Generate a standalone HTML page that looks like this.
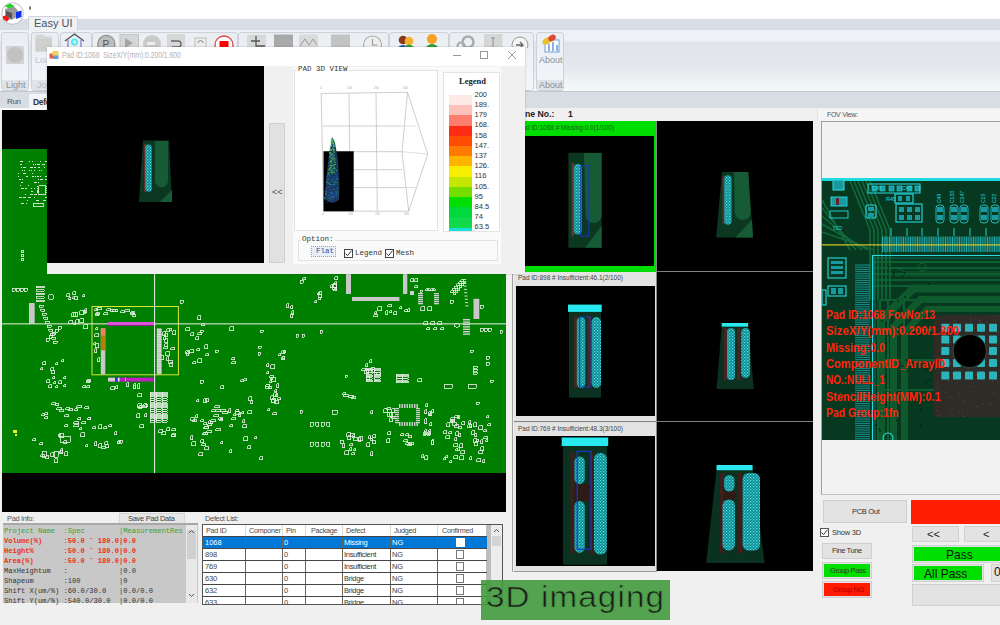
<!DOCTYPE html>
<html><head><meta charset="utf-8">
<style>
*{margin:0;padding:0;box-sizing:border-box}
html,body{width:1000px;height:625px;overflow:hidden;background:#f0f0f0;font-family:"Liberation Sans",sans-serif;color:#222}
.a{position:absolute}
.t{position:absolute;white-space:nowrap;line-height:1}
.sx{transform-origin:0 0}
</style></head><body>
<!-- top white bar -->
<div class="a" style="left:0;top:0;width:1000px;height:19px;background:#fff"></div>
<!-- tab strip -->
<div class="a" style="left:0;top:19px;width:1000px;height:11px;background:#d9dde5"></div>
<!-- ribbon -->
<div class="a" style="left:0;top:30px;width:1000px;height:62px;background:linear-gradient(#eef2f7 0,#eef2f7 10px,#dfe3ea 13px,#e6eaee 40px,#f3f8f9 58px);border-bottom:1px solid #c3c7cc"></div>

<!-- logo -->
<svg class="a" style="left:0;top:0" width="34" height="28" viewBox="0 0 34 28">
<circle cx="12.5" cy="13.5" r="10.8" fill="#fff" stroke="#aaa" stroke-width="0.8"/>
<polygon points="5,6 10,3.5 14.5,6 9.5,9" fill="#18d818"/>
<polygon points="5,9 14,6.5 17.5,10 17.5,17 11,20 5,16" fill="#9a9a9a"/>
<polygon points="6,11 12,13 12,19 6,16" fill="#555"/>
<polygon points="16,12 21.5,10.5 21.5,17 16,19" fill="#1030f0"/>
<polygon points="3,16 7,15.5 9.5,19 7,21.5 3,19" fill="#f01818"/>
<rect x="29" y="6.5" width="2" height="3" fill="#777"/>
</svg>
<!-- Easy UI tab -->
<div class="a" style="left:28px;top:16px;width:50px;height:15px;background:#eef1f5;border:1px solid #cfd4db;border-bottom:none;border-radius:2px 2px 0 0"></div>
<div class="t" style="left:34px;top:18px;font-size:11px;color:#4a5360">Easy UI</div>
<!-- ribbon groups -->
<div class="a" style="left:1px;top:32px;width:28px;height:59px;border:1px solid #cdd2d9;border-radius:3px;background:linear-gradient(#eaeef3,#f3f6f9)"></div>
<div class="a" style="left:2px;top:80px;width:26px;height:10px;background:#dfe3e9"></div>
<div class="t" style="left:6px;top:81px;font-size:9px;color:#8a9097">Light</div>
<div class="a" style="left:6px;top:46px;width:18px;height:18px;background:#d3d3d3"></div>
<div class="a" style="left:7px;top:47px;width:16px;height:16px;border-radius:50%;background:#c2c2c2"></div>
<div class="a" style="left:31px;top:32px;width:28px;height:59px;border:1px solid #cdd2d9;border-radius:3px;background:linear-gradient(#eaeef3,#f3f6f9)"></div>
<div class="a" style="left:32px;top:80px;width:26px;height:10px;background:#dfe3e9"></div>
<div class="t" style="left:37px;top:81px;font-size:9px;color:#b5b9bf">Jo</div>
<div class="t" style="left:35px;top:56px;font-size:9px;color:#c0c3c7">Loa</div>
<svg class="a" style="left:34px;top:33px" width="20" height="20"><path d="M1.5 1.5h8l2 2h6.5v15h-16.5z" fill="#d6d6d6"/><path d="M1.5 6h16.5v12.5h-16.5z" fill="#cfcfcf"/></svg>
<div class="a" style="left:60px;top:32px;width:32px;height:59px;border:1px solid #cdd2d9;border-radius:3px;background:linear-gradient(#eaeef3,#f3f6f9)"></div>
<svg class="a" style="left:63px;top:32px" width="24" height="16"><path d="M2 9 L11.5 2 L21 9" fill="none" stroke="#4a4f57" stroke-width="1.3"/><path d="M5 8v8M18 8v8" stroke="#8a8ad0" stroke-width="1.4"/><circle cx="11.5" cy="10" r="3.6" fill="#50e8f0"/><circle cx="11.5" cy="10" r="1.8" fill="#c8ffff"/></svg>
<div class="a" style="left:92px;top:32px;width:146px;height:59px;border:1px solid #cdd2d9;border-radius:3px;background:linear-gradient(#eaeef3,#f3f6f9)"></div>
<svg class="a" style="left:92px;top:32px" width="146" height="16">
<circle cx="14.3" cy="12" r="8.6" fill="#bdbdbd" stroke="#8d8d8d" stroke-width="1.2"/>
<text x="10.5" y="16" font-family="Liberation Sans" font-size="10" fill="#555">P</text>
<rect x="28" y="2.5" width="18.5" height="14" fill="#d6d6d6" stroke="#c3c3c3"/>
<path d="M33 6 L41 11 L33 16z" fill="#a5a5a5"/>
<circle cx="60" cy="12" r="9" fill="#c9c9c9"/>
<rect x="55" y="10" width="8" height="3" fill="#eee"/>
<rect x="75" y="2" width="18" height="14" fill="#d7d7d7"/>
<path d="M79 9 h7 a3 3 0 0 1 0 6 h-6" fill="none" stroke="#666" stroke-width="1.3"/>
<rect x="103" y="6" width="11" height="10" fill="#ececec" stroke="#bbb"/>
<path d="M106 11 a2.5 2.5 0 0 1 5 0" fill="none" stroke="#888"/>
<circle cx="132" cy="13" r="9" fill="#fff" stroke="#e04040" stroke-width="1.3"/>
<rect x="127.5" y="9" width="9" height="8" fill="#f00"/>
</svg>
<div class="a" style="left:238px;top:32px;width:151px;height:59px;border:1px solid #cdd2d9;border-radius:3px;background:linear-gradient(#eaeef3,#f3f6f9)"></div>
<svg class="a" style="left:238px;top:32px" width="151" height="16">
<rect x="9" y="2.5" width="19" height="13.5" fill="#d8d8d8"/>
<path d="M18 4v10h9M13 9h9" fill="none" stroke="#555" stroke-width="1.3"/>
<rect x="36" y="2.5" width="19" height="13.5" fill="#a9a9a9"/>
<rect x="61" y="2.5" width="19" height="13.5" fill="#dadada"/>
<path d="M62 14 l5-7 l4 6 l4-6 l4 6" fill="none" stroke="#999" stroke-width="1"/>
<rect x="93" y="2.5" width="19" height="13.5" fill="#c3c3c3"/>
<circle cx="134.5" cy="13" r="9" fill="#eee" stroke="#aaa" stroke-width="1.1"/>
<path d="M134.5 7v6h5" fill="none" stroke="#999" stroke-width="1.1"/>
</svg>
<div class="a" style="left:389px;top:32px;width:60px;height:59px;border:1px solid #cdd2d9;border-radius:3px;background:linear-gradient(#eaeef3,#f3f6f9)"></div>
<svg class="a" style="left:389px;top:32px" width="60" height="16">
<circle cx="14" cy="8" r="4.3" fill="#8a3a1a"/><path d="M8 16 q6-6 12 0z" fill="#2050b0"/>
<circle cx="20" cy="9" r="4.3" fill="#f5b030"/><path d="M14 16 q6-7 12 0z" fill="#30a030"/>
<circle cx="43" cy="7" r="5" fill="#f5a020"/><path d="M36 16 q7-8 14 0z" fill="#30a030"/>
</svg>
<div class="a" style="left:449px;top:32px;width:85px;height:59px;border:1px solid #cdd2d9;border-radius:3px;background:linear-gradient(#eaeef3,#f3f6f9)"></div>
<svg class="a" style="left:449px;top:32px" width="85" height="16">
<circle cx="19" cy="10" r="5.5" fill="none" stroke="#aaa" stroke-width="2.5"/><circle cx="12" cy="14" r="3.5" fill="none" stroke="#aaa" stroke-width="2"/>
<rect x="35" y="2" width="18.5" height="14" fill="#d6d6d6"/><path d="M44 5v11M42 6h4" stroke="#999" stroke-width="1.2"/>
<circle cx="71" cy="13" r="8" fill="#f4f4f4" stroke="#999" stroke-width="1"/><path d="M67 13h7M71 10l3 3l-3 3" fill="none" stroke="#666" stroke-width="1.3"/>
</svg>
<div class="t" style="left:520px;top:56px;font-size:9px;color:#aaa">t</div>
<div class="a" style="left:536px;top:32px;width:28px;height:59px;border:1px solid #cdd2d9;border-radius:3px;background:linear-gradient(#eaeef3,#f3f6f9)"></div>
<div class="a" style="left:537px;top:80px;width:26px;height:10px;background:#dfe3e9"></div>
<div class="t" style="left:539px;top:81px;font-size:9px;color:#8a9097">About</div>
<div class="t" style="left:539px;top:56px;font-size:9px;color:#8a9097">About</div>
<svg class="a" style="left:540px;top:33px" width="22" height="20">
<rect x="5" y="7" width="14" height="12" fill="#fff" stroke="#6fa0d8"/><path d="M9 11v7M13 9v9M17 12v6" stroke="#6fa0d8" stroke-width="1.6"/>
<ellipse cx="7" cy="8" rx="5" ry="3.2" fill="#e8c030" transform="rotate(-30 7 8)"/>
<ellipse cx="12" cy="5" rx="4" ry="3" fill="#e04830" transform="rotate(-30 12 5)"/>
</svg>

<!-- gray band under ribbon -->
<div class="a" style="left:0;top:92px;width:1000px;height:16px;background:#d8dce3"></div>
<div class="a" style="left:0;top:108px;width:1000px;height:517px;background:#f0f0f0"></div>

<!-- left view area -->
<div class="a" style="left:2px;top:110px;width:504px;height:402px;background:#000"></div>
<!-- PCB -->
<svg class="a" style="left:2px;top:149px" width="504" height="324" viewBox="2 149 504 324">
<rect x="2" y="149" width="504" height="324" fill="#008000"/>
<path d="M38.5 185.5h7.0v9.0h-7.0zM33.0 203.0h10.0v3.5h-10.0zM21.0 250.0h2.5v2.5h-2.5zM21.0 254.0h2.5v2.5h-2.5zM21.0 258.0h2.5v2.5h-2.5zM12.0 288.0h3.0v3.0h-3.0zM16.0 288.0h3.0v3.0h-3.0zM20.0 288.0h3.0v3.0h-3.0zM24.0 288.0h3.0v3.0h-3.0zM36.0 286.0h8.0v1.5h-8.0zM36.0 289.5h8.0v1.5h-8.0zM36.0 293.0h8.0v1.5h-8.0zM36.0 296.5h8.0v1.5h-8.0zM36.0 300.0h8.0v1.5h-8.0zM48 297a3 2.5 0 1 0 6 0a3 2.5 0 1 0 -6 0zM72.5 296.5h2.0v2.0h-2.0zM82.5 294.5h2.0v2.0h-2.0zM66.5 293.5h3.0v3.0h-3.0zM68.5 297.5h2.0v2.0h-2.0zM72.5 291.5h3.0v3.0h-3.0zM74.5 296.5h3.0v3.0h-3.0zM39.0 305.0h4.0v2.0h-4.0zM40.6 309.0h4.0v2.0h-4.0zM42.2 313.0h4.0v2.0h-4.0zM43.8 317.0h4.0v2.0h-4.0zM45.4 321.0h4.0v2.0h-4.0zM47.0 325.0h4.0v2.0h-4.0zM48.6 329.0h4.0v2.0h-4.0zM50.2 333.0h4.0v2.0h-4.0zM51.8 337.0h4.0v2.0h-4.0zM53.4 341.0h4.0v2.0h-4.0zM46.0 338.0h3.0v3.0h-3.0zM49.0 335.0h3.0v3.0h-3.0zM52.0 332.0h3.0v3.0h-3.0zM55.0 329.0h3.0v3.0h-3.0zM58.0 326.0h3.0v3.0h-3.0zM84.5 308.5h2.0v4.0h-2.0zM73.5 322.5h2.0v2.0h-2.0zM75.5 319.5h3.0v4.0h-3.0zM83.5 310.5h2.0v3.0h-2.0zM73.5 312.5h4.0v4.0h-4.0zM68.5 320.5h4.0v3.0h-4.0zM71.5 312.5h4.0v4.0h-4.0zM79.5 318.5h4.0v4.0h-4.0zM79.5 310.5h4.0v4.0h-4.0zM83.5 324.5h4.0v4.0h-4.0zM106.5 308.5h4.0v2.0h-4.0zM94.5 308.5h3.0v2.0h-3.0zM96.5 307.5h5.0v2.0h-5.0zM95.5 312.5h4.0v2.0h-4.0zM95.5 313.5h3.0v2.0h-3.0zM103.5 312.5h4.0v2.0h-4.0zM130.5 311.5h4.0v2.0h-4.0zM130.5 312.5h3.0v2.0h-3.0zM112.5 309.5h5.0v2.0h-5.0zM132.5 314.5h3.0v2.0h-3.0zM124.5 309.5h5.0v2.0h-5.0zM110.5 309.5h5.0v2.0h-5.0zM120.5 310.5h4.0v2.0h-4.0zM94.5 348.5h2.0v4.0h-2.0zM93.5 342.5h2.0v2.0h-2.0zM94.5 333.5h4.0v3.0h-4.0zM95.5 327.5h2.0v2.0h-2.0zM97.5 357.5h2.0v4.0h-2.0zM95.5 343.5h3.0v4.0h-3.0zM164.5 333.5h3.0v3.0h-3.0zM170.5 347.5h4.0v2.0h-4.0zM169.5 362.5h3.0v4.0h-3.0zM163.5 336.5h2.0v3.0h-2.0zM166.5 328.5h3.0v3.0h-3.0zM172.5 330.5h3.0v4.0h-3.0zM164.5 338.5h3.0v4.0h-3.0zM162.5 331.5h3.0v4.0h-3.0zM168.5 360.5h4.0v3.0h-4.0zM160.5 355.5h3.0v4.0h-3.0zM163.5 346.5h4.0v2.0h-4.0zM169.5 328.5h2.0v2.0h-2.0zM164.5 343.5h3.0v3.0h-3.0zM165.5 351.5h4.0v4.0h-4.0zM166.5 356.5h2.0v4.0h-2.0zM197.5 358.5h4.0v4.0h-4.0zM192.5 361.5h3.0v2.0h-3.0zM197.5 315.5h3.0v4.0h-3.0zM190.5 332.5h3.0v3.0h-3.0zM195.5 336.5h3.0v3.0h-3.0zM204.5 344.5h3.0v4.0h-3.0zM185.5 350.5h4.0v3.0h-4.0zM197.5 332.5h4.0v2.0h-4.0zM185.5 327.5h4.0v3.0h-4.0zM196.5 348.5h3.0v2.0h-3.0zM201.5 323.5h3.0v2.0h-3.0zM189.5 349.5h4.0v3.0h-4.0zM186.5 351.5h2.0v4.0h-2.0zM205.5 353.5h3.0v2.0h-3.0zM229.5 326.5h4.0v4.0h-4.0zM231.5 357.5h3.0v2.0h-3.0zM231.5 361.5h4.0v2.0h-4.0zM50.5 367.5h3.0v3.0h-3.0zM48.5 384.5h3.0v3.0h-3.0zM63.5 384.5h2.0v2.0h-2.0zM52.5 376.5h2.0v2.0h-2.0zM58.5 380.5h3.0v3.0h-3.0zM46.5 379.5h3.0v3.0h-3.0zM55.5 385.5h2.0v2.0h-2.0zM63.5 376.5h2.0v2.0h-2.0zM61.5 359.5h2.0v2.0h-2.0zM40.5 367.5h2.0v2.0h-2.0zM55.5 362.5h2.0v2.0h-2.0zM42.5 361.5h3.0v3.0h-3.0zM53.5 381.5h2.0v2.0h-2.0zM51.5 370.5h3.0v3.0h-3.0zM86.5 379.5h4.0v2.0h-4.0zM86.5 385.5h3.0v2.0h-3.0zM86.5 380.5h3.0v2.0h-3.0zM82.5 385.5h3.0v2.0h-3.0zM110.5 386.5h4.0v3.0h-4.0zM115.5 385.5h2.0v3.0h-2.0zM126.5 382.5h2.0v4.0h-2.0zM137.5 383.5h2.0v5.0h-2.0zM133.5 385.5h2.0v3.0h-2.0zM133.5 383.5h2.0v5.0h-2.0zM137.5 393.5h4.0v3.0h-4.0zM143.5 403.5h3.0v4.0h-3.0zM144.5 413.5h2.0v3.0h-2.0zM139.5 424.5h4.0v3.0h-4.0zM138.5 405.5h3.0v3.0h-3.0zM137.5 403.5h4.0v4.0h-4.0zM139.5 405.5h3.0v2.0h-3.0zM144.5 404.5h3.0v2.0h-3.0zM136.5 413.5h3.0v4.0h-3.0zM150.0 392.0h5.0v1.6h-5.0zM150.0 394.2h5.0v1.6h-5.0zM150.0 396.4h5.0v1.6h-5.0zM150.0 398.6h5.0v1.6h-5.0zM150.0 400.8h5.0v1.6h-5.0zM150.0 403.0h5.0v1.6h-5.0zM150.0 405.2h5.0v1.6h-5.0zM150.0 407.4h5.0v1.6h-5.0zM150.0 409.6h5.0v1.6h-5.0zM150.0 411.8h5.0v1.6h-5.0zM150.0 414.0h5.0v1.6h-5.0zM150.0 416.2h5.0v1.6h-5.0zM150.0 418.4h5.0v1.6h-5.0zM150.0 420.6h5.0v1.6h-5.0zM156.0 392.0h5.0v1.6h-5.0zM156.0 394.2h5.0v1.6h-5.0zM156.0 396.4h5.0v1.6h-5.0zM156.0 398.6h5.0v1.6h-5.0zM156.0 400.8h5.0v1.6h-5.0zM156.0 403.0h5.0v1.6h-5.0zM156.0 405.2h5.0v1.6h-5.0zM156.0 407.4h5.0v1.6h-5.0zM156.0 409.6h5.0v1.6h-5.0zM156.0 411.8h5.0v1.6h-5.0zM156.0 414.0h5.0v1.6h-5.0zM156.0 416.2h5.0v1.6h-5.0zM156.0 418.4h5.0v1.6h-5.0zM156.0 420.6h5.0v1.6h-5.0zM162.0 392.0h5.0v1.6h-5.0zM162.0 394.2h5.0v1.6h-5.0zM162.0 396.4h5.0v1.6h-5.0zM162.0 398.6h5.0v1.6h-5.0zM162.0 400.8h5.0v1.6h-5.0zM162.0 403.0h5.0v1.6h-5.0zM162.0 405.2h5.0v1.6h-5.0zM162.0 407.4h5.0v1.6h-5.0zM162.0 409.6h5.0v1.6h-5.0zM162.0 411.8h5.0v1.6h-5.0zM162.0 414.0h5.0v1.6h-5.0zM162.0 416.2h5.0v1.6h-5.0zM162.0 418.4h5.0v1.6h-5.0zM162.0 420.6h5.0v1.6h-5.0zM44.5 412.5h3.0v2.0h-3.0zM51.5 402.5h4.0v2.0h-4.0zM87.5 417.5h3.0v2.0h-3.0zM68.5 408.5h4.0v2.0h-4.0zM56.5 407.5h5.0v2.0h-5.0zM44.5 416.5h3.0v2.0h-3.0zM77.5 417.5h3.0v2.0h-3.0zM64.5 424.5h3.0v2.0h-3.0zM59.5 409.5h4.0v2.0h-4.0zM64.5 414.5h4.0v2.0h-4.0zM73.5 424.5h5.0v2.0h-5.0zM81.5 421.5h4.0v2.0h-4.0zM87.5 417.5h3.0v2.0h-3.0zM73.5 421.5h5.0v2.0h-5.0zM84.5 406.5h4.0v2.0h-4.0zM74.5 408.5h3.0v2.0h-3.0zM65.5 407.5h4.0v2.0h-4.0zM55.5 403.5h3.0v2.0h-3.0zM76.5 405.5h5.0v2.0h-5.0zM41.5 413.5h3.0v2.0h-3.0zM58.5 433.5h2.0v3.0h-2.0zM60.5 448.5h2.0v4.0h-2.0zM59.5 433.5h4.0v4.0h-4.0zM59.5 450.5h3.0v3.0h-3.0zM64.5 451.5h3.0v4.0h-3.0zM63.5 440.5h3.0v3.0h-3.0zM60.0 436.0h10.0v6.0h-10.0zM98.5 443.5h3.0v4.0h-3.0zM92.5 426.5h3.0v2.0h-3.0zM117.5 440.5h2.0v3.0h-2.0zM103.5 426.5h3.0v2.0h-3.0zM114.5 431.5h2.0v3.0h-2.0zM94.5 441.5h2.0v4.0h-2.0zM108.5 424.5h3.0v2.0h-3.0zM101.5 446.5h4.0v2.0h-4.0zM98.5 424.5h3.0v4.0h-3.0zM85.5 444.5h2.0v2.0h-2.0zM79.5 427.5h2.0v2.0h-2.0zM80.5 432.5h4.0v4.0h-4.0zM105.5 444.5h3.0v3.0h-3.0zM104.5 441.5h3.0v3.0h-3.0zM117.5 441.5h2.0v2.0h-2.0zM32.5 438.5h3.0v2.0h-3.0zM39.5 442.5h3.0v2.0h-3.0zM42.0 451.0h4.0v6.0h-4.0zM54.0 451.0h4.0v6.0h-4.0zM45.5 455.5h3.0v3.0h-3.0zM50.5 452.5h3.0v4.0h-3.0zM40.5 454.5h4.0v2.0h-4.0zM54.5 458.5h3.0v4.0h-3.0zM158.5 429.5h4.0v3.0h-4.0zM161.5 431.5h4.0v3.0h-4.0zM171.5 434.5h3.0v2.0h-3.0zM171.5 428.5h4.0v2.0h-4.0zM171.5 433.5h4.0v3.0h-4.0zM166.5 427.5h3.0v3.0h-3.0zM196.5 399.5h2.0v2.0h-2.0zM200.5 439.5h3.0v3.0h-3.0zM205.5 398.5h3.0v3.0h-3.0zM190.5 435.5h2.0v4.0h-2.0zM192.5 419.5h4.0v2.0h-4.0zM203.5 398.5h3.0v4.0h-3.0zM210.5 421.5h2.0v2.0h-2.0zM208.5 420.5h2.0v3.0h-2.0zM201.5 443.5h4.0v2.0h-4.0zM198.5 452.5h4.0v3.0h-4.0zM203.5 432.5h4.0v2.0h-4.0zM202.5 432.5h3.0v2.0h-3.0zM195.5 414.5h2.0v3.0h-2.0zM190.5 417.5h4.0v3.0h-4.0zM204.5 446.5h4.0v3.0h-4.0zM191.5 441.5h4.0v4.0h-4.0zM207.5 423.5h4.0v2.0h-4.0zM229.5 424.5h3.0v2.0h-3.0zM214.5 405.5h5.0v2.0h-5.0zM220.5 409.5h5.0v2.0h-5.0zM218.5 417.5h4.0v2.0h-4.0zM211.5 409.5h4.0v2.0h-4.0zM203.5 426.5h5.0v2.0h-5.0zM213.5 414.5h5.0v2.0h-5.0zM215.5 409.5h5.0v2.0h-5.0zM219.5 418.5h3.0v2.0h-3.0zM222.5 411.5h5.0v2.0h-5.0zM210.5 419.5h5.0v2.0h-5.0zM206.5 430.5h5.0v2.0h-5.0zM215.5 428.5h5.0v2.0h-5.0zM203.5 422.5h3.0v2.0h-3.0zM200.5 419.5h3.0v2.0h-3.0zM204.5 426.5h4.0v2.0h-4.0zM240.5 379.5h3.0v2.0h-3.0zM231.5 417.5h4.0v2.0h-4.0zM229.5 449.5h2.0v3.0h-2.0zM243.5 436.5h4.0v4.0h-4.0zM247.5 445.5h3.0v3.0h-3.0zM220.5 385.5h3.0v3.0h-3.0zM235.5 411.5h4.0v3.0h-4.0zM250.5 400.5h2.0v3.0h-2.0zM242.5 424.5h4.0v3.0h-4.0zM248.5 396.5h3.0v4.0h-3.0zM235.5 409.5h3.0v2.0h-3.0zM242.5 419.5h2.0v3.0h-2.0zM228.5 408.5h2.0v4.0h-2.0zM254.5 436.5h2.0v2.0h-2.0zM247.5 410.5h4.0v3.0h-4.0zM241.5 411.5h2.0v2.0h-2.0zM220.5 441.5h2.0v2.0h-2.0zM238.5 412.5h2.0v4.0h-2.0zM243.5 378.5h3.0v2.0h-3.0zM233.5 413.5h2.0v2.0h-2.0zM332.5 284.5h4.0v3.0h-4.0zM334.5 281.5h2.0v2.0h-2.0zM334.5 276.5h3.0v3.0h-3.0zM333.5 288.5h3.0v2.0h-3.0zM332.5 287.5h4.0v2.0h-4.0zM330.5 284.5h3.0v3.0h-3.0zM332.5 283.5h4.0v4.0h-4.0zM410.5 278.5h3.0v3.0h-3.0zM414.5 278.5h3.0v3.0h-3.0zM414.5 285.5h3.0v2.0h-3.0zM425.5 288.5h2.0v2.0h-2.0zM428.0 288.5h2.0v2.0h-2.0zM430.5 288.5h2.0v2.0h-2.0zM433.0 288.5h2.0v2.0h-2.0zM420.5 306.5h4.0v4.0h-4.0zM427.5 306.5h4.0v4.0h-4.0zM450.5 290.5h3.0v2.0h-3.0zM453.5 292.5h2.0v2.0h-2.0zM452.5 288.3h3.0v2.0h-3.0zM455.5 290.3h2.0v2.0h-2.0zM454.5 286.1h3.0v2.0h-3.0zM457.5 288.1h2.0v2.0h-2.0zM456.5 283.9h3.0v2.0h-3.0zM459.5 285.9h2.0v2.0h-2.0zM458.5 281.7h3.0v2.0h-3.0zM461.5 283.7h2.0v2.0h-2.0zM460.5 279.5h3.0v2.0h-3.0zM463.5 281.5h2.0v2.0h-2.0zM423.5 321.5h4.0v3.0h-4.0zM430.5 321.5h4.0v3.0h-4.0zM437.5 321.5h4.0v3.0h-4.0zM426.5 327.5h3.0v2.0h-3.0zM433.5 327.5h3.0v2.0h-3.0zM440.5 327.5h3.0v2.0h-3.0zM290.5 305.5h2.0v3.0h-2.0zM291.5 310.5h2.0v4.0h-2.0zM290.5 313.5h2.0v4.0h-2.0zM286.5 303.5h2.0v4.0h-2.0zM302.5 277.5h3.0v2.0h-3.0zM318.5 297.5h2.0v2.0h-2.0zM318.5 294.5h3.0v3.0h-3.0zM317.5 292.5h2.0v2.0h-2.0zM318.5 291.5h3.0v3.0h-3.0zM314.5 300.5h2.0v2.0h-2.0zM407.5 308.5h2.0v3.0h-2.0zM387.5 304.5h4.0v2.0h-4.0zM377.5 306.5h4.0v4.0h-4.0zM373.5 314.5h4.0v2.0h-4.0zM374.5 311.5h2.0v2.0h-2.0zM399.5 306.5h2.0v2.0h-2.0zM385.5 310.5h2.0v4.0h-2.0zM404.5 309.5h3.0v2.0h-3.0zM389.5 310.5h2.0v2.0h-2.0zM393.5 311.5h3.0v3.0h-3.0zM454.5 325.4a2.5 2 0 1 0 5 0a2.5 2 0 1 0 -5 0zM480.0 328.0h3.0v3.0h-3.0zM484.0 328.0h3.0v3.0h-3.0zM488.0 328.0h3.0v3.0h-3.0zM296.0 334.0h2.0v3.0h-2.0zM302.0 334.0h2.0v3.0h-2.0zM258.0 346.0h3.0v2.0h-3.0zM281.5 356.5h3.0v3.0h-3.0zM282.5 356.5h2.0v2.0h-2.0zM283.5 350.5h2.0v2.0h-2.0zM281.5 350.5h3.0v3.0h-3.0zM278.5 353.5h2.0v2.0h-2.0zM270.5 364.5h4.0v4.0h-4.0zM265.5 384.5h4.0v4.0h-4.0zM266.5 363.5h2.0v3.0h-2.0zM271.5 399.5h3.0v3.0h-3.0zM266.5 371.5h2.0v2.0h-2.0zM271.5 398.5h4.0v4.0h-4.0zM265.5 384.5h4.0v2.0h-4.0zM274.5 400.5h4.0v3.0h-4.0zM270.5 395.5h3.0v4.0h-3.0zM269.5 375.5h4.0v2.0h-4.0zM273.5 392.5h3.0v4.0h-3.0zM268.5 386.5h3.0v2.0h-3.0zM272.5 412.5h4.0v2.0h-4.0zM275.5 393.5h2.0v3.0h-2.0zM274.5 389.5h2.0v2.0h-2.0zM267.5 408.5h2.0v2.0h-2.0zM270.5 377.5h2.0v2.0h-2.0zM277.5 397.5h3.0v2.0h-3.0zM271.5 377.5h4.0v4.0h-4.0zM276.5 383.5h2.0v4.0h-2.0zM269.5 380.5h2.0v2.0h-2.0zM473.0 366.0h4.0v2.0h-4.0zM473.0 369.0h4.0v2.0h-4.0zM473.0 372.0h4.0v2.0h-4.0zM486.0 356.0h3.0v3.0h-3.0zM486.0 362.0h3.0v3.0h-3.0zM361.5 368.5h4.0v2.0h-4.0zM376.5 372.5h4.0v2.0h-4.0zM370.5 367.5h4.0v2.0h-4.0zM369.5 359.5h2.0v3.0h-2.0zM366.5 376.5h3.0v3.0h-3.0zM365.5 363.5h2.0v3.0h-2.0zM371.5 369.5h3.0v3.0h-3.0zM364.5 369.5h4.0v4.0h-4.0zM366.0 368.0h6.0v1.6h-6.0zM366.0 370.4h6.0v1.6h-6.0zM366.0 372.8h6.0v1.6h-6.0zM366.0 375.2h6.0v1.6h-6.0zM366.0 377.6h6.0v1.6h-6.0zM366.0 380.0h6.0v1.6h-6.0zM374.0 368.0h6.0v1.6h-6.0zM374.0 370.4h6.0v1.6h-6.0zM374.0 372.8h6.0v1.6h-6.0zM374.0 375.2h6.0v1.6h-6.0zM374.0 377.6h6.0v1.6h-6.0zM374.0 380.0h6.0v1.6h-6.0zM396.0 374.0h6.0v1.6h-6.0zM396.0 376.4h6.0v1.6h-6.0zM396.0 378.8h6.0v1.6h-6.0zM396.0 381.2h6.0v1.6h-6.0zM402.0 374.0h6.0v1.6h-6.0zM402.0 376.4h6.0v1.6h-6.0zM402.0 378.8h6.0v1.6h-6.0zM402.0 381.2h6.0v1.6h-6.0zM417.5 378.5h4.0v3.0h-4.0zM351.5 396.5h4.0v2.0h-4.0zM348.5 395.5h5.0v2.0h-5.0zM343.5 394.5h5.0v2.0h-5.0zM342.5 392.5h3.0v2.0h-3.0zM332.0 410.0h5.0v4.0h-5.0zM370.5 410.5h2.0v3.0h-2.0zM391.5 416.5h3.0v2.0h-3.0zM389.5 412.5h3.0v4.0h-3.0zM386.5 407.5h4.0v2.0h-4.0zM383.5 408.5h4.0v4.0h-4.0zM387.5 431.5h3.0v3.0h-3.0zM387.5 412.5h4.0v4.0h-4.0zM386.5 438.5h3.0v4.0h-3.0zM389.5 417.5h3.0v4.0h-3.0zM391.5 408.5h3.0v4.0h-3.0zM424.5 409.5h2.0v4.0h-2.0zM429.5 422.5h2.0v3.0h-2.0zM424.5 429.5h2.0v5.0h-2.0zM428.5 429.5h2.0v5.0h-2.0zM429.5 412.5h2.0v3.0h-2.0zM425.5 403.5h2.0v3.0h-2.0zM423.5 431.5h2.0v4.0h-2.0zM431.5 409.5h2.0v3.0h-2.0zM428.5 411.5h2.0v4.0h-2.0zM424.5 418.5h2.0v5.0h-2.0zM427.5 431.5h2.0v4.0h-2.0zM431.5 439.5h2.0v5.0h-2.0zM431.5 440.5h2.0v4.0h-2.0zM405.5 442.5h4.0v2.0h-4.0zM409.5 442.5h4.0v2.0h-4.0zM400.5 433.5h3.0v2.0h-3.0zM403.5 439.5h4.0v2.0h-4.0zM405.5 433.5h3.0v2.0h-3.0zM407.5 443.5h4.0v2.0h-4.0zM408.5 435.5h3.0v2.0h-3.0zM310.0 422.0h3.0v4.0h-3.0zM315.5 422.0h3.0v4.0h-3.0zM321.0 422.0h3.0v4.0h-3.0zM326.5 422.0h3.0v4.0h-3.0zM310.0 442.0h3.0v4.0h-3.0zM315.5 442.0h3.0v4.0h-3.0zM321.0 442.0h3.0v4.0h-3.0zM326.5 442.0h3.0v4.0h-3.0zM351.5 452.5h3.0v2.0h-3.0zM372.5 440.5h3.0v3.0h-3.0zM358.5 437.5h2.0v4.0h-2.0zM372.5 434.5h3.0v3.0h-3.0zM349.5 447.5h2.0v3.0h-2.0zM342.5 443.5h2.0v4.0h-2.0zM349.5 443.5h3.0v2.0h-3.0zM344.5 450.5h4.0v4.0h-4.0zM350.5 433.5h4.0v3.0h-4.0zM368.5 435.5h2.0v3.0h-2.0zM347.5 435.5h3.0v4.0h-3.0zM353.5 448.5h2.0v2.0h-2.0zM353.5 437.5h4.0v3.0h-4.0zM358.5 436.5h4.0v4.0h-4.0zM352.5 434.5h2.0v3.0h-2.0zM346.5 432.5h4.0v4.0h-4.0zM370.5 438.5h2.0v2.0h-2.0zM366.5 442.5h3.0v4.0h-3.0zM370.5 451.5h2.0v4.0h-2.0zM454.5 437.5h2.0v3.0h-2.0zM453.5 443.5h4.0v3.0h-4.0zM473.5 422.5h3.0v4.0h-3.0zM480.5 439.5h2.0v4.0h-2.0zM474.5 441.5h3.0v4.0h-3.0zM448.5 431.5h3.0v2.0h-3.0zM452.5 422.5h4.0v3.0h-4.0zM469.5 456.5h2.0v3.0h-2.0zM474.5 433.5h2.0v3.0h-2.0zM459.5 455.5h4.0v4.0h-4.0zM449.5 460.5h2.0v2.0h-2.0zM455.5 448.5h2.0v2.0h-2.0zM457.5 415.5h2.0v3.0h-2.0zM450.5 417.5h4.0v3.0h-4.0zM455.5 431.5h3.0v4.0h-3.0zM476.5 458.5h4.0v3.0h-4.0zM473.5 438.5h3.0v4.0h-3.0zM450.5 419.5h2.0v3.0h-2.0zM461.5 421.5h3.0v3.0h-3.0zM468.5 420.5h2.0v3.0h-2.0zM454.5 424.5h4.0v3.0h-4.0zM458.5 426.5h3.0v2.0h-3.0zM445.5 455.5h2.0v2.0h-2.0zM446.5 422.5h3.0v4.0h-3.0zM487.5 423.5h3.0v2.0h-3.0zM443.5 430.5h3.0v3.0h-3.0zM467.5 424.5h4.0v3.0h-4.0zM478.5 425.5h4.0v4.0h-4.0zM482.5 459.5h2.0v3.0h-2.0zM480.5 446.5h3.0v4.0h-3.0zM485.5 439.5h2.0v2.0h-2.0zM454.5 415.5h4.0v2.0h-4.0zM445.5 435.5h4.0v3.0h-4.0zM486.5 415.5h2.0v2.0h-2.0zM478.5 450.5h4.0v3.0h-4.0zM460.5 450.5h4.0v3.0h-4.0zM483.5 436.5h4.0v2.0h-4.0zM453.5 455.5h4.0v3.0h-4.0zM469.5 424.5h2.0v2.0h-2.0zM459.5 443.5h3.0v4.0h-3.0zM471.5 430.5h3.0v4.0h-3.0zM483.5 429.5h3.0v2.0h-3.0zM457.5 447.5h2.0v3.0h-2.0zM476.5 439.5h2.0v2.0h-2.0zM450.5 419.5h4.0v2.0h-4.0zM458.5 433.5h2.0v3.0h-2.0zM444.0 384.0h8.0v4.0h-8.0zM468.0 384.0h8.0v4.0h-8.0zM476.0 402.0h3.0v2.0h-3.0zM421.5 454.5h2.0v3.0h-2.0zM424.5 455.5h3.0v4.0h-3.0zM443.5 457.5h2.0v2.0h-2.0zM259 458a2 2 0 1 0 4 0a2 2 0 1 0 -4 0zM258.0 352.0h2.0v3.0h-2.0zM480.0 305.0h3.0v3.0h-3.0zM500.0 330.0h2.0v3.0h-2.0zM470.0 350.0h3.0v2.0h-3.0zM490.0 380.0h3.0v2.0h-3.0zM300.0 280.0h3.0v3.0h-3.0zM320.0 330.0h2.0v3.0h-2.0zM345.0 375.0h2.0v2.0h-2.0zM260.0 330.0h3.0v2.0h-3.0zM300.0 410.0h2.0v3.0h-2.0zM340.0 440.0h3.0v3.0h-3.0zM420.0 290.0h2.0v2.0h-2.0zM450.0 300.0h3.0v3.0h-3.0zM180.0 300.0h3.0v3.0h-3.0zM200.0 330.0h3.0v2.0h-3.0zM215.0 350.0h3.0v2.0h-3.0zM120.0 440.0h2.0v3.0h-2.0zM200.0 380.0h3.0v3.0h-3.0z" fill="none" stroke="#e8f0e8" stroke-width="0.8" shape-rendering="crispEdges"/>
<rect x="20.0" y="161.0" width="3.0" height="1.0" fill="#d8e8d8"/>
<rect x="29.0" y="161.0" width="1.0" height="1.0" fill="#d8e8d8"/>
<rect x="32.0" y="161.0" width="1.0" height="1.0" fill="#d8e8d8"/>
<rect x="40.0" y="161.0" width="1.0" height="1.0" fill="#d8e8d8"/>
<rect x="45.0" y="161.0" width="3.0" height="1.0" fill="#d8e8d8"/>
<rect x="20.0" y="164.0" width="2.0" height="1.0" fill="#d8e8d8"/>
<rect x="33.0" y="164.0" width="1.0" height="1.0" fill="#d8e8d8"/>
<rect x="35.0" y="164.0" width="1.0" height="1.0" fill="#d8e8d8"/>
<rect x="37.0" y="164.0" width="3.0" height="1.0" fill="#d8e8d8"/>
<rect x="42.0" y="164.0" width="3.0" height="1.0" fill="#d8e8d8"/>
<rect x="21.0" y="167.0" width="1.0" height="1.0" fill="#d8e8d8"/>
<rect x="23.0" y="167.0" width="3.0" height="1.0" fill="#d8e8d8"/>
<rect x="30.0" y="167.0" width="3.0" height="1.0" fill="#d8e8d8"/>
<rect x="34.0" y="167.0" width="2.0" height="1.0" fill="#d8e8d8"/>
<rect x="38.0" y="167.0" width="2.0" height="1.0" fill="#d8e8d8"/>
<rect x="44.0" y="167.0" width="1.0" height="1.0" fill="#d8e8d8"/>
<rect x="22.0" y="170.0" width="1.0" height="1.0" fill="#d8e8d8"/>
<rect x="24.0" y="170.0" width="1.0" height="1.0" fill="#d8e8d8"/>
<rect x="29.0" y="170.0" width="1.0" height="1.0" fill="#d8e8d8"/>
<rect x="31.0" y="170.0" width="1.0" height="1.0" fill="#d8e8d8"/>
<rect x="34.0" y="170.0" width="1.0" height="1.0" fill="#d8e8d8"/>
<rect x="39.0" y="170.0" width="1.0" height="1.0" fill="#d8e8d8"/>
<rect x="41.0" y="170.0" width="1.0" height="1.0" fill="#d8e8d8"/>
<rect x="18.0" y="173.0" width="1.0" height="1.0" fill="#d8e8d8"/>
<rect x="23.0" y="173.0" width="3.0" height="1.0" fill="#d8e8d8"/>
<rect x="32.0" y="173.0" width="1.0" height="1.0" fill="#d8e8d8"/>
<rect x="18.0" y="176.0" width="1.0" height="1.0" fill="#d8e8d8"/>
<rect x="26.0" y="176.0" width="2.0" height="1.0" fill="#d8e8d8"/>
<rect x="32.0" y="176.0" width="2.0" height="1.0" fill="#d8e8d8"/>
<rect x="35.0" y="176.0" width="1.0" height="1.0" fill="#d8e8d8"/>
<rect x="37.0" y="176.0" width="2.0" height="1.0" fill="#d8e8d8"/>
<rect x="40.0" y="176.0" width="1.0" height="1.0" fill="#d8e8d8"/>
<rect x="45.0" y="176.0" width="3.0" height="1.0" fill="#d8e8d8"/>
<rect x="19.0" y="179.0" width="2.0" height="1.0" fill="#d8e8d8"/>
<rect x="22.0" y="179.0" width="1.0" height="1.0" fill="#d8e8d8"/>
<rect x="38.0" y="179.0" width="1.0" height="1.0" fill="#d8e8d8"/>
<rect x="40.0" y="179.0" width="3.0" height="1.0" fill="#d8e8d8"/>
<rect x="45.0" y="179.0" width="2.0" height="1.0" fill="#d8e8d8"/>
<rect x="21.0" y="182.0" width="2.0" height="1.0" fill="#d8e8d8"/>
<rect x="34.0" y="182.0" width="3.0" height="1.0" fill="#d8e8d8"/>
<rect x="38.0" y="182.0" width="1.0" height="1.0" fill="#d8e8d8"/>
<rect x="20.0" y="185.0" width="1.0" height="1.0" fill="#d8e8d8"/>
<rect x="28.0" y="185.0" width="1.0" height="1.0" fill="#d8e8d8"/>
<rect x="41.0" y="185.0" width="2.0" height="1.0" fill="#d8e8d8"/>
<rect x="21.0" y="188.0" width="3.0" height="1.0" fill="#d8e8d8"/>
<rect x="25.0" y="188.0" width="2.0" height="1.0" fill="#d8e8d8"/>
<rect x="31.0" y="188.0" width="1.0" height="1.0" fill="#d8e8d8"/>
<rect x="34.0" y="188.0" width="1.0" height="1.0" fill="#d8e8d8"/>
<rect x="45.0" y="188.0" width="1.0" height="1.0" fill="#d8e8d8"/>
<rect x="31.0" y="191.0" width="2.0" height="1.0" fill="#d8e8d8"/>
<rect x="37.0" y="191.0" width="2.0" height="1.0" fill="#d8e8d8"/>
<rect x="25.0" y="194.0" width="1.0" height="1.0" fill="#d8e8d8"/>
<rect x="30.0" y="194.0" width="3.0" height="1.0" fill="#d8e8d8"/>
<rect x="34.0" y="194.0" width="3.0" height="1.0" fill="#d8e8d8"/>
<rect x="38.0" y="194.0" width="1.0" height="1.0" fill="#d8e8d8"/>
<rect x="41.0" y="194.0" width="1.0" height="1.0" fill="#d8e8d8"/>
<rect x="43.0" y="194.0" width="1.0" height="1.0" fill="#d8e8d8"/>
<rect x="19.0" y="197.0" width="3.0" height="1.0" fill="#d8e8d8"/>
<rect x="23.0" y="197.0" width="3.0" height="1.0" fill="#d8e8d8"/>
<rect x="28.0" y="197.0" width="3.0" height="1.0" fill="#d8e8d8"/>
<rect x="34.0" y="197.0" width="1.0" height="1.0" fill="#d8e8d8"/>
<rect x="45.0" y="197.0" width="2.0" height="1.0" fill="#d8e8d8"/>
<rect x="27.0" y="200.0" width="1.0" height="1.0" fill="#d8e8d8"/>
<rect x="36.0" y="200.0" width="3.0" height="1.0" fill="#d8e8d8"/>
<rect x="43.0" y="200.0" width="3.0" height="1.0" fill="#d8e8d8"/>
<rect x="21.0" y="203.0" width="3.0" height="1.0" fill="#d8e8d8"/>
<rect x="26.0" y="203.0" width="1.0" height="1.0" fill="#d8e8d8"/>
<rect x="36.0" y="203.0" width="3.0" height="1.0" fill="#d8e8d8"/>
<rect x="42.0" y="203.0" width="1.0" height="1.0" fill="#d8e8d8"/>
<rect x="37.0" y="186.0" width="1.0" height="1.0" fill="#d8e8d8"/>
<rect x="46.0" y="186.0" width="1.0" height="1.0" fill="#d8e8d8"/>
<rect x="37.0" y="188.0" width="1.0" height="1.0" fill="#d8e8d8"/>
<rect x="46.0" y="188.0" width="1.0" height="1.0" fill="#d8e8d8"/>
<rect x="37.0" y="190.0" width="1.0" height="1.0" fill="#d8e8d8"/>
<rect x="46.0" y="190.0" width="1.0" height="1.0" fill="#d8e8d8"/>
<rect x="37.0" y="192.0" width="1.0" height="1.0" fill="#d8e8d8"/>
<rect x="46.0" y="192.0" width="1.0" height="1.0" fill="#d8e8d8"/>
<rect x="346.0" y="274.0" width="5.0" height="20.0" fill="#c8c8c8"/>
<rect x="403.0" y="274.0" width="4.3" height="20.0" fill="#c8c8c8"/>
<rect x="352.0" y="297.0" width="47.4" height="4.0" fill="#c8c8c8"/>
<rect x="410.0" y="291.0" width="4.0" height="4.0" fill="#d0d0d0"/>
<rect x="418.0" y="293.0" width="5.0" height="1.3" fill="#d0d0d0"/>
<rect x="418.0" y="295.0" width="5.0" height="1.3" fill="#d0d0d0"/>
<rect x="418.0" y="297.0" width="5.0" height="1.3" fill="#d0d0d0"/>
<rect x="418.0" y="299.0" width="5.0" height="1.3" fill="#d0d0d0"/>
<rect x="418.0" y="301.0" width="5.0" height="1.3" fill="#d0d0d0"/>
<rect x="418.0" y="303.0" width="5.0" height="1.3" fill="#d0d0d0"/>
<rect x="434.0" y="293.0" width="5.0" height="1.3" fill="#d0d0d0"/>
<rect x="434.0" y="295.0" width="5.0" height="1.3" fill="#d0d0d0"/>
<rect x="434.0" y="297.0" width="5.0" height="1.3" fill="#d0d0d0"/>
<rect x="434.0" y="299.0" width="5.0" height="1.3" fill="#d0d0d0"/>
<rect x="434.0" y="301.0" width="5.0" height="1.3" fill="#d0d0d0"/>
<rect x="434.0" y="303.0" width="5.0" height="1.3" fill="#d0d0d0"/>
<rect x="463.0" y="279.0" width="3.0" height="1.0" fill="#d8e8d8"/>
<rect x="463.3" y="282.3" width="3.0" height="1.0" fill="#d8e8d8"/>
<rect x="463.6" y="285.6" width="3.0" height="1.0" fill="#d8e8d8"/>
<rect x="463.9" y="288.9" width="3.0" height="1.0" fill="#d8e8d8"/>
<rect x="464.2" y="292.2" width="3.0" height="1.0" fill="#d8e8d8"/>
<rect x="464.5" y="295.5" width="3.0" height="1.0" fill="#d8e8d8"/>
<rect x="464.8" y="298.8" width="3.0" height="1.0" fill="#d8e8d8"/>
<rect x="465.1" y="302.1" width="3.0" height="1.0" fill="#d8e8d8"/>
<rect x="465.4" y="305.4" width="3.0" height="1.0" fill="#d8e8d8"/>
<rect x="473.5" y="298.8" width="5.8" height="20.2" fill="#c8c8c8"/>
<rect x="463.0" y="319.0" width="7.0" height="1.4" fill="#d0d0d0"/>
<rect x="463.0" y="321.4" width="7.0" height="1.4" fill="#d0d0d0"/>
<rect x="463.0" y="323.8" width="7.0" height="1.4" fill="#d0d0d0"/>
<rect x="463.0" y="326.2" width="7.0" height="1.4" fill="#d0d0d0"/>
<rect x="463.0" y="328.6" width="7.0" height="1.4" fill="#d0d0d0"/>
<rect x="463.0" y="331.0" width="7.0" height="1.4" fill="#d0d0d0"/>
<rect x="463.0" y="333.4" width="7.0" height="1.4" fill="#d0d0d0"/>
<rect x="399.0" y="404.0" width="1.4" height="4.0" fill="#d0d0d0"/>
<rect x="399.0" y="422.0" width="1.4" height="4.0" fill="#d0d0d0"/>
<rect x="395.0" y="408.0" width="4.0" height="1.2" fill="#d0d0d0"/>
<rect x="416.0" y="408.0" width="4.0" height="1.2" fill="#d0d0d0"/>
<rect x="401.5" y="404.0" width="1.4" height="4.0" fill="#d0d0d0"/>
<rect x="401.5" y="422.0" width="1.4" height="4.0" fill="#d0d0d0"/>
<rect x="395.0" y="410.0" width="4.0" height="1.2" fill="#d0d0d0"/>
<rect x="416.0" y="410.0" width="4.0" height="1.2" fill="#d0d0d0"/>
<rect x="404.0" y="404.0" width="1.4" height="4.0" fill="#d0d0d0"/>
<rect x="404.0" y="422.0" width="1.4" height="4.0" fill="#d0d0d0"/>
<rect x="395.0" y="412.0" width="4.0" height="1.2" fill="#d0d0d0"/>
<rect x="416.0" y="412.0" width="4.0" height="1.2" fill="#d0d0d0"/>
<rect x="406.5" y="404.0" width="1.4" height="4.0" fill="#d0d0d0"/>
<rect x="406.5" y="422.0" width="1.4" height="4.0" fill="#d0d0d0"/>
<rect x="395.0" y="414.0" width="4.0" height="1.2" fill="#d0d0d0"/>
<rect x="416.0" y="414.0" width="4.0" height="1.2" fill="#d0d0d0"/>
<rect x="409.0" y="404.0" width="1.4" height="4.0" fill="#d0d0d0"/>
<rect x="409.0" y="422.0" width="1.4" height="4.0" fill="#d0d0d0"/>
<rect x="395.0" y="416.0" width="4.0" height="1.2" fill="#d0d0d0"/>
<rect x="416.0" y="416.0" width="4.0" height="1.2" fill="#d0d0d0"/>
<rect x="411.5" y="404.0" width="1.4" height="4.0" fill="#d0d0d0"/>
<rect x="411.5" y="422.0" width="1.4" height="4.0" fill="#d0d0d0"/>
<rect x="395.0" y="418.0" width="4.0" height="1.2" fill="#d0d0d0"/>
<rect x="416.0" y="418.0" width="4.0" height="1.2" fill="#d0d0d0"/>
<rect x="414.0" y="404.0" width="1.4" height="4.0" fill="#d0d0d0"/>
<rect x="414.0" y="422.0" width="1.4" height="4.0" fill="#d0d0d0"/>
<rect x="395.0" y="420.0" width="4.0" height="1.2" fill="#d0d0d0"/>
<rect x="416.0" y="420.0" width="4.0" height="1.2" fill="#d0d0d0"/>
<rect x="416.5" y="404.0" width="1.4" height="4.0" fill="#d0d0d0"/>
<rect x="416.5" y="422.0" width="1.4" height="4.0" fill="#d0d0d0"/>
<rect x="395.0" y="422.0" width="4.0" height="1.2" fill="#d0d0d0"/>
<rect x="416.0" y="422.0" width="4.0" height="1.2" fill="#d0d0d0"/>
<rect x="13" y="430" width="4" height="3" fill="#f0f020"/><rect x="15" y="434" width="2" height="2" fill="#f0f020"/>
<rect x="29" y="303" width="5.7" height="20.7" fill="#c8c8c8"/>
<rect x="92" y="306.5" width="86.4" height="68.3" fill="none" stroke="#d8e830" stroke-width="1"/>
<rect x="2" y="323.3" width="504" height="1.1" fill="#d8e8d8"/>
<rect x="154" y="273" width="1.1" height="200" fill="#d8e8d8"/>
<rect x="108" y="322" width="45.6" height="3.5" fill="#e050e0"/><rect x="108" y="325" width="45.6" height="0.8" fill="#802080"/>
<rect x="100.8" y="328.4" width="4.5" height="46" fill="#c8c8c8"/><rect x="100.8" y="328.4" width="4.5" height="7" fill="#f08060"/><rect x="100.8" y="335.4" width="4.5" height="15" fill="#b08010"/>
<rect x="156.8" y="328.4" width="4.8" height="46" fill="#c8c8c8"/>
<rect x="156.8" y="329.0" width="4.8" height="0.5" fill="#e8e8e8"/>
<rect x="156.8" y="331.5" width="4.8" height="0.5" fill="#e8e8e8"/>
<rect x="156.8" y="334.0" width="4.8" height="0.5" fill="#e8e8e8"/>
<rect x="156.8" y="336.5" width="4.8" height="0.5" fill="#e8e8e8"/>
<rect x="156.8" y="339.0" width="4.8" height="0.5" fill="#e8e8e8"/>
<rect x="156.8" y="341.5" width="4.8" height="0.5" fill="#e8e8e8"/>
<rect x="156.8" y="344.0" width="4.8" height="0.5" fill="#e8e8e8"/>
<rect x="156.8" y="346.5" width="4.8" height="0.5" fill="#e8e8e8"/>
<rect x="156.8" y="349.0" width="4.8" height="0.5" fill="#e8e8e8"/>
<rect x="156.8" y="351.5" width="4.8" height="0.5" fill="#e8e8e8"/>
<rect x="156.8" y="354.0" width="4.8" height="0.5" fill="#e8e8e8"/>
<rect x="156.8" y="356.5" width="4.8" height="0.5" fill="#e8e8e8"/>
<rect x="156.8" y="359.0" width="4.8" height="0.5" fill="#e8e8e8"/>
<rect x="156.8" y="361.5" width="4.8" height="0.5" fill="#e8e8e8"/>
<rect x="156.8" y="364.0" width="4.8" height="0.5" fill="#e8e8e8"/>
<rect x="156.8" y="366.5" width="4.8" height="0.5" fill="#e8e8e8"/>
<rect x="156.8" y="369.0" width="4.8" height="0.5" fill="#e8e8e8"/>
<rect x="156.8" y="371.5" width="4.8" height="0.5" fill="#e8e8e8"/>
<rect x="108" y="377.7" width="45.6" height="3.8" fill="#c020c0"/><rect x="108" y="377.7" width="7" height="3.8" fill="#d0d0d0"/><rect x="115" y="377.7" width="2" height="3.8" fill="#2030e0"/><rect x="118" y="377.7" width="1.5" height="3.8" fill="#e8e8e8"/><rect x="125" y="377.7" width="0.8" height="3.8" fill="#e0a0e0"/>
</svg>
<!-- /PCB -->

<!-- image grid -->
<div class="a" style="left:512px;top:120px;width:1px;height:452px;background:#a0a0a0"></div>
<div class="a" style="left:657px;top:121px;width:156px;height:450px;background:#000"></div>
<div class="a" style="left:514px;top:121px;width:143px;height:151px;background:#00dd00"></div>
<div class="a" style="left:517px;top:136px;width:137px;height:130px;background:#000"></div>

<div class="a" style="left:514px;top:272px;width:143px;height:149px;background:#e3e3e3"></div>
<div class="a" style="left:516px;top:286px;width:139px;height:130px;background:#000"></div>
<div class="a" style="left:514px;top:421px;width:299px;height:1px;background:#808080"></div>
<div class="a" style="left:657px;top:271px;width:156px;height:1px;background:#808080"></div>
<div class="a" style="left:514px;top:422px;width:143px;height:150px;background:#e3e3e3;border-bottom:1px solid #999"></div>
<div class="a" style="left:516px;top:436px;width:139px;height:130px;background:#000"></div>
<div class="a" style="left:656px;top:121px;width:1px;height:450px;background:#888"></div>

<!-- CELLS -->
<svg width="0" height="0" style="position:absolute"><defs><pattern id="dp" width="3" height="3" patternUnits="userSpaceOnUse"><rect width="3" height="3" fill="#137a80"/><rect x="0" y="0" width="1.4" height="1.4" fill="#40e4ea"/><rect x="1.5" y="1.5" width="1.4" height="1.4" fill="#2cc8d0"/><rect x="1.6" y="0.2" width="0.9" height="0.9" fill="#1aa0a8"/></pattern></defs></svg>
<svg class="a" style="left:560px;top:145px" width="50" height="110" viewBox="560 145 50 110"><rect x="568.4" y="152.8" width="33.2" height="95" fill="#0c3822"/><path d="M584 153 h17.6 v62 a8 8 0 0 1 -16 0z" fill="#165a36"/><path d="M585 247.8 L601.6 226 L601.6 247.8z" fill="#165a36"/><rect x="571.5" y="163" width="2.5" height="73" fill="#70302a"/><rect x="573.8" y="164.0" width="8.0" height="70.4" rx="4.0" fill="url(#dp)"/><rect x="580.8" y="165.6" width="8" height="70.4" fill="none" stroke="#1838c0" stroke-width="1"/></svg>
<svg class="a" style="left:710px;top:165px" width="50" height="80" viewBox="710 165 50 80"><polygon points="722,172 748.2,172 753,237.6 716.2,237.6" fill="#0c3822"/><path d="M734 172 h14.2 l2.5 40 a8 8 0 0 1 -16 0z" fill="#165a36"/><path d="M735 237.6 L752 220 L753 237.6z" fill="#165a36"/><rect x="722.5" y="176" width="2" height="48" fill="#6a2a20"/><rect x="724.2" y="175.2" width="7.4" height="49.6" rx="3.7" fill="url(#dp)"/></svg>
<svg class="a" style="left:560px;top:300px" width="50" height="105" viewBox="560 300 50 105"><rect x="569" y="311.9" width="32" height="85.7" fill="#0b3220"/><rect x="568" y="304.6" width="33.7" height="7.3" fill="#28e8f0"/><rect x="574" y="316" width="3" height="72" fill="#4a2420"/><rect x="587" y="316" width="4" height="72" fill="#4a2420"/><rect x="576.8" y="317.0" width="8.5" height="71.0" rx="4.2" fill="url(#dp)"/><rect x="591.6" y="317.0" width="9.4" height="71.0" rx="4.7" fill="url(#dp)"/><rect x="579.6" y="317" width="10.4" height="70" fill="none" stroke="#1838c0" stroke-width="1"/></svg>
<svg class="a" style="left:710px;top:318px" width="50" height="75" viewBox="710 318 50 75"><polygon points="721.7,326.7 748.2,326.7 753.8,389 716.6,389" fill="#0b3220"/><rect x="721.7" y="323" width="26.5" height="3.7" fill="#28e8f0"/><rect x="724" y="328" width="3" height="52" fill="#4a2420"/><rect x="737" y="328" width="3.5" height="52" fill="#4a2420"/><rect x="727.0" y="328.0" width="8.0" height="52.0" rx="4.0" fill="url(#dp)"/><rect x="741.2" y="328.0" width="8.8" height="50.0" rx="4.4" fill="url(#dp)"/></svg>
<svg class="a" style="left:555px;top:435px" width="60" height="132" viewBox="555 435 60 132"><rect x="563" y="446" width="44" height="118.7" fill="#0b3220"/><rect x="561.7" y="437.5" width="46.5" height="8.5" fill="#28e8f0"/><rect x="570.5" y="452" width="4" height="102" fill="#3e1e1a"/><rect x="589.5" y="452" width="4.5" height="102" fill="#3e1e1a"/><rect x="574.5" y="484" width="15" height="17" fill="#2e1a16"/><rect x="574.4" y="456.4" width="10.4" height="27.6" rx="5.2" fill="url(#dp)"/><rect x="574.4" y="501.0" width="10.4" height="51.7" rx="5.2" fill="url(#dp)"/><rect x="594.0" y="453.0" width="12.8" height="101.4" rx="6.0" fill="url(#dp)"/><rect x="577.2" y="451.3" width="13.8" height="98" fill="none" stroke="#1838c0" stroke-width="1.2"/></svg>
<svg class="a" style="left:700px;top:460px" width="70" height="108" viewBox="700 460 70 108"><polygon points="716.5,470 752.6,470 764.6,563 706.2,563" fill="#0b3220"/><rect x="716.5" y="465" width="36.1" height="5.2" fill="#28e8f0"/><rect x="720" y="473" width="4" height="80" fill="#3e1e1a"/><rect x="738" y="473" width="4.5" height="80" fill="#3e1e1a"/><rect x="724" y="491" width="11" height="9" fill="#2e1a16"/><rect x="724.0" y="475.0" width="10.5" height="16.5" rx="5.2" fill="url(#dp)"/><rect x="722.5" y="499.6" width="12.5" height="51.0" rx="6.0" fill="url(#dp)"/><rect x="742.6" y="473.0" width="17.4" height="77.6" rx="6.0" fill="url(#dp)"/></svg>
<!-- /CELLS -->
<!-- cell labels -->
<div class="t" style="left:525px;top:110px;font-size:8.7px;font-weight:bold;color:#222">ne No.:</div>
<div class="t" style="left:568px;top:110px;font-size:8.7px;font-weight:bold;color:#222">1</div>
<div class="t sx" style="left:518px;top:123.5px;font-size:7.5px;color:#1a5a1a;transform:scaleX(0.86)">Pad ID:1068 # Missing:0.0(1/100)</div>
<div class="t sx" style="left:518px;top:273.5px;font-size:7.5px;color:#444;transform:scaleX(0.86)">Pad ID:898 # Insufficient:46.1(2/100)</div>
<div class="t sx" style="left:518px;top:424.5px;font-size:7.5px;color:#444;transform:scaleX(0.86)">Pad ID:769 # Insufficient:48.3(3/100)</div>
<div class="a" style="left:817px;top:109px;width:183px;height:12px;background:#f5f5f5;border-left:1px solid #e4e4e4"></div>
<div class="t" style="left:827px;top:110.5px;font-size:7px;letter-spacing:-0.3px;color:#555">FOV View:</div>

<!-- FOV -->
<div class="a" style="left:821px;top:121px;width:179px;height:374px;border-left:1px solid #a0a0a0;border-top:1px solid #a0a0a0;border-bottom:1px solid #c0c0c0;background:#f2f2f2"></div>
<!-- FOVIMG -->
<svg class="a" style="left:822px;top:178px" width="178" height="262" viewBox="822 178 178 262">
<rect x="822" y="178" width="178" height="262" fill="#06391f"/>
<path d="M850 181 L870 230 L870 300M854 181 L874 230 L874 300M858 181 L878 230 L878 300M862 181 L882 230 L882 300M866 181 L886 230 L886 300M870 181 L890 230 L890 300M822 200 L850 250M822 208 L856 250M822 216 L862 250M822 224 L868 250M822 232 L874 250M872 262 L1000 262M872 268 L1000 268M872 274 L1000 274M872 280 L1000 280M872 286 L1000 286M880 300 L1000 300M880 330 L1000 330M880 360 L1000 360M880 390 L1000 390M880 440 L880 300M888 440 L888 300M896 440 L896 300M904 440 L904 300" stroke="#12683a" stroke-width="1.6" fill="none"/>
<polygon points="912,284.5 1000,284.5 1000,292.5 915,292.5 885,322 885,440 877,440 877,318" fill="#0e5a2c"/>
<polygon points="919,296 1000,296 1000,303 922,303 897,328 897,440 890,440 890,325" fill="#0e5a2c"/>
<polygon points="926,306 1000,306 1000,312 929,312 908,333 908,440 901,440 901,331" fill="#0e5a2c"/>
<path d="M880 262 H1000 M890 268 Q900 268 905 272 H1000 M895 276 H1000 M878 262 L878 440" stroke="#0f6a34" stroke-width="0.8" fill="none"/>
<path d="M922 263 a4 4 0 1 0 0.1 0" stroke="#10703a" stroke-width="0.8" fill="none"/>
<rect x="822" y="178" width="178" height="3" fill="#20d8e0"/>
<rect x="833" y="180" width="11" height="10" fill="#189aa0" stroke="#2ad8e0" stroke-width="1.1"/>
<rect x="872" y="186" width="5" height="5" fill="#189aa0" stroke="#2ad8e0" stroke-width="0.6"/>
<rect x="880" y="186" width="5" height="5" fill="#189aa0" stroke="#2ad8e0" stroke-width="0.6"/>
<rect x="889" y="186" width="5" height="5" fill="#189aa0" stroke="#2ad8e0" stroke-width="0.6"/>
<rect x="897" y="186" width="5" height="5" fill="#189aa0" stroke="#2ad8e0" stroke-width="0.6"/>
<rect x="907" y="186" width="5" height="5" fill="#189aa0" stroke="#2ad8e0" stroke-width="0.6"/>
<rect x="915" y="186" width="5" height="5" fill="#189aa0" stroke="#2ad8e0" stroke-width="0.6"/>
<rect x="868" y="184" width="52" height="9" fill="none" stroke="#2ad8e0" stroke-width="1"/>
<rect x="895" y="194" width="18" height="9" fill="none" stroke="#2ad8e0" stroke-width="1.1"/>
<rect x="898" y="196" width="4" height="5" fill="#189aa0"/>
<rect x="906" y="196" width="4" height="5" fill="#189aa0"/>
<rect x="896" y="204" width="26" height="18" fill="none" stroke="#2ad8e0" stroke-width="1.1"/>
<rect x="899" y="207" width="5" height="5" fill="#189aa0"/>
<rect x="899" y="215" width="5" height="5" fill="#189aa0"/>
<rect x="907" y="207" width="5" height="5" fill="#189aa0"/>
<rect x="907" y="215" width="5" height="5" fill="#189aa0"/>
<rect x="915" y="207" width="5" height="5" fill="#189aa0"/>
<rect x="915" y="215" width="5" height="5" fill="#189aa0"/>
<rect x="866" y="205" width="10" height="13" rx="2" fill="none" stroke="#2ad8e0" stroke-width="1.1"/>
<rect x="868" y="207" width="6" height="4" fill="#189aa0"/>
<rect x="868" y="213" width="6" height="4" fill="#189aa0"/>
<rect x="936" y="205" width="8" height="18" rx="3" fill="none" stroke="#2ad8e0" stroke-width="0.8"/>
<rect x="937" y="207" width="6" height="5" fill="#189aa0"/><rect x="937" y="215" width="6" height="5" fill="#189aa0"/>
<rect x="950" y="205" width="8" height="18" rx="3" fill="none" stroke="#2ad8e0" stroke-width="0.8"/>
<rect x="951" y="207" width="6" height="5" fill="#189aa0"/><rect x="951" y="215" width="6" height="5" fill="#189aa0"/>
<rect x="960" y="205" width="8" height="18" rx="3" fill="none" stroke="#2ad8e0" stroke-width="0.8"/>
<rect x="961" y="207" width="6" height="5" fill="#189aa0"/><rect x="961" y="215" width="6" height="5" fill="#189aa0"/>
<rect x="980" y="205" width="8" height="18" rx="3" fill="none" stroke="#2ad8e0" stroke-width="0.8"/>
<rect x="981" y="207" width="6" height="5" fill="#189aa0"/><rect x="981" y="215" width="6" height="5" fill="#189aa0"/>
<rect x="991" y="205" width="8" height="18" rx="3" fill="none" stroke="#2ad8e0" stroke-width="0.8"/>
<rect x="992" y="207" width="6" height="5" fill="#189aa0"/><rect x="992" y="215" width="6" height="5" fill="#189aa0"/>
<text x="872" y="190" font-family="Liberation Sans" font-size="5.5" fill="#2ad8e0">C45</text>
<text x="902" y="190" font-family="Liberation Sans" font-size="5.5" fill="#2ad8e0">C45</text>
<text x="886" y="201" font-family="Liberation Sans" font-size="5.5" fill="#2ad8e0">R45</text>
<text x="0" y="0" transform="translate(941 203) rotate(-90)" font-family="Liberation Sans" font-size="5" fill="#2ad8e0">C49</text>
<text x="0" y="0" transform="translate(954 203) rotate(-90)" font-family="Liberation Sans" font-size="5" fill="#2ad8e0">C133</text>
<text x="0" y="0" transform="translate(964 203) rotate(-90)" font-family="Liberation Sans" font-size="5" fill="#2ad8e0">C147</text>
<text x="0" y="0" transform="translate(985 203) rotate(-90)" font-family="Liberation Sans" font-size="5" fill="#2ad8e0">C15</text>
<text x="0" y="0" transform="translate(996 203) rotate(-90)" font-family="Liberation Sans" font-size="5" fill="#2ad8e0">C22</text>
<rect x="831" y="197" width="16" height="9" fill="#189aa0" stroke="#2ad8e0" stroke-width="0.9"/>
<rect x="836" y="198" width="3" height="7" fill="#6a2020"/>
<rect x="830" y="211" width="18" height="7" fill="none" stroke="#2ad8e0" stroke-width="0.9"/>
<text x="0" y="0" transform="translate(842 226) rotate(180)" font-family="Liberation Sans" font-size="5" fill="#2ad8e0">C51</text>
<path d="M882.5 236.5v15.5M884.2 236.5v15.5M886.0 236.5v15.5M887.8 236.5v15.5M889.5 236.5v15.5M891.2 236.5v15.5M893.0 236.5v15.5M894.8 236.5v15.5M896.5 236.5v15.5M898.2 236.5v15.5M900.0 236.5v15.5M901.8 236.5v15.5M903.5 236.5v15.5M905.2 236.5v15.5M907.0 236.5v15.5M908.8 236.5v15.5M910.5 236.5v15.5M912.2 236.5v15.5M914.0 236.5v15.5M915.8 236.5v15.5M917.5 236.5v15.5M919.2 236.5v15.5M921.0 236.5v15.5M922.8 236.5v15.5M924.5 236.5v15.5M926.2 236.5v15.5M928.0 236.5v15.5M929.8 236.5v15.5M931.5 236.5v15.5M933.2 236.5v15.5M935.0 236.5v15.5M936.8 236.5v15.5M938.5 236.5v15.5M940.2 236.5v15.5M942.0 236.5v15.5M943.8 236.5v15.5M945.5 236.5v15.5M947.2 236.5v15.5M949.0 236.5v15.5M950.8 236.5v15.5M952.5 236.5v15.5M954.2 236.5v15.5M956.0 236.5v15.5M957.8 236.5v15.5M959.5 236.5v15.5M961.2 236.5v15.5M963.0 236.5v15.5M964.8 236.5v15.5M966.5 236.5v15.5M968.2 236.5v15.5M970.0 236.5v15.5M971.8 236.5v15.5M973.5 236.5v15.5M975.2 236.5v15.5M977.0 236.5v15.5M978.8 236.5v15.5M980.5 236.5v15.5M982.2 236.5v15.5M984.0 236.5v15.5M985.8 236.5v15.5M987.5 236.5v15.5M989.2 236.5v15.5M991.0 236.5v15.5M992.8 236.5v15.5M994.5 236.5v15.5M996.2 236.5v15.5M998.0 236.5v15.5M999.8 236.5v15.5" stroke="#28b8c0" stroke-width="0.9"/>
<path d="M891 228v8M907 228v8M922 228v8M938 228v8M954 228v8M970 228v8M986 228v8" stroke="#2ad8e0" stroke-width="0.9"/>
<rect x="822" y="244.3" width="178" height="1.2" fill="#d8c828"/>
<path d="M1000 255.5 H872.5 V440" fill="none" stroke="#2ad8e0" stroke-width="1.2"/>
<path d="M1000 258 H875 V440" fill="none" stroke="#138a8a" stroke-width="0.6"/>
<rect x="828" y="258" width="18" height="20" fill="none" stroke="#2ad8e0" stroke-width="1.1"/>
<rect x="831" y="261" width="12" height="3" fill="#189aa0"/>
<rect x="831" y="266" width="12" height="3" fill="#189aa0"/>
<rect x="831" y="271" width="12" height="3" fill="#189aa0"/>
<rect x="828" y="286" width="18" height="10" fill="none" stroke="#2ad8e0" stroke-width="1.1"/>
<rect x="831" y="288" width="5" height="6" fill="#189aa0"/><rect x="838" y="288" width="5" height="6" fill="#189aa0"/>
<path d="M855 265.0h15M855 267.2h15M855 269.4h15M855 271.6h15M855 273.8h15M855 276.0h15M855 278.2h15M855 280.4h15M855 282.6h15M855 284.8h15M855 287.0h15M855 289.2h15M855 291.4h15M855 293.6h15M855 295.8h15M855 298.0h15M855 300.2h15M855 302.4h15M855 304.6h15M855 306.8h15M855 309.0h15M855 311.2h15M855 313.4h15M855 315.6h15M855 317.8h15M855 320.0h15M855 322.2h15M855 324.4h15M855 326.6h15M855 328.8h15M855 331.0h15M855 333.2h15M855 335.4h15M855 337.6h15M855 339.8h15M855 342.0h15M855 344.2h15M855 346.4h15M855 348.6h15M855 350.8h15M855 353.0h15M855 355.2h15M855 357.4h15M855 359.6h15M855 361.8h15M855 364.0h15M855 366.2h15M855 368.4h15M855 370.6h15M855 372.8h15M855 375.0h15M855 377.2h15M855 379.4h15M855 381.6h15M855 383.8h15M855 386.0h15M855 388.2h15M855 390.4h15M855 392.6h15M855 394.8h15M855 397.0h15M855 399.2h15M855 401.4h15M855 403.6h15M855 405.8h15M855 408.0h15M855 410.2h15M855 412.4h15M855 414.6h15M855 416.8h15M855 419.0h15M855 421.2h15M855 423.4h15M855 425.6h15M855 427.8h15M855 430.0h15M855 432.2h15M855 434.4h15M855 436.6h15M855 438.8h15" stroke="#1a9aa0" stroke-width="0.9"/>
<rect x="822" y="290" width="4" height="15" fill="none" stroke="#2ad8e0" stroke-width="1.1"/>
<rect x="934" y="315" width="66" height="102" fill="#2f2c28"/>
<rect x="974.5" y="389.9" width="1" height="1" fill="#20302a"/>
<rect x="995.3" y="389.7" width="1" height="1" fill="#20302a"/>
<rect x="935.9" y="362.0" width="1" height="1" fill="#5a5048"/>
<rect x="976.2" y="406.0" width="1" height="1" fill="#5a5048"/>
<rect x="958.2" y="402.7" width="1" height="1" fill="#4a2a24"/>
<rect x="969.3" y="373.0" width="1" height="1" fill="#5a5048"/>
<rect x="981.5" y="356.2" width="1" height="1" fill="#5a5048"/>
<rect x="993.6" y="392.3" width="1" height="1" fill="#5a5048"/>
<rect x="983.5" y="322.3" width="1" height="1" fill="#20302a"/>
<rect x="974.1" y="327.8" width="1" height="1" fill="#5a5048"/>
<rect x="997.2" y="315.5" width="1" height="1" fill="#5a5048"/>
<rect x="996.4" y="331.8" width="1" height="1" fill="#5a5048"/>
<rect x="952.8" y="412.1" width="1" height="1" fill="#20302a"/>
<rect x="990.9" y="378.2" width="1" height="1" fill="#5a5048"/>
<rect x="995.2" y="384.8" width="1" height="1" fill="#4a2a24"/>
<rect x="953.4" y="351.5" width="1" height="1" fill="#5a5048"/>
<rect x="994.8" y="341.6" width="1" height="1" fill="#4a2a24"/>
<rect x="953.6" y="375.9" width="1" height="1" fill="#5a5048"/>
<rect x="972.7" y="386.5" width="1" height="1" fill="#5a5048"/>
<rect x="954.1" y="397.7" width="1" height="1" fill="#4a2a24"/>
<rect x="979.3" y="333.7" width="1" height="1" fill="#4a2a24"/>
<rect x="979.8" y="320.8" width="1" height="1" fill="#5a5048"/>
<rect x="995.7" y="351.1" width="1" height="1" fill="#4a2a24"/>
<rect x="935.2" y="394.6" width="1" height="1" fill="#4a2a24"/>
<rect x="958.5" y="400.0" width="1" height="1" fill="#4a2a24"/>
<rect x="937.0" y="333.3" width="1" height="1" fill="#5a5048"/>
<rect x="941.7" y="339.9" width="1" height="1" fill="#4a2a24"/>
<rect x="956.4" y="350.8" width="1" height="1" fill="#20302a"/>
<rect x="950.3" y="361.7" width="1" height="1" fill="#20302a"/>
<rect x="982.6" y="395.5" width="1" height="1" fill="#4a2a24"/>
<rect x="936.4" y="410.5" width="1" height="1" fill="#5a5048"/>
<rect x="947.6" y="366.8" width="1" height="1" fill="#4a2a24"/>
<rect x="993.7" y="349.3" width="1" height="1" fill="#20302a"/>
<rect x="969.4" y="346.6" width="1" height="1" fill="#4a2a24"/>
<rect x="953.9" y="395.7" width="1" height="1" fill="#20302a"/>
<rect x="943.7" y="384.6" width="1" height="1" fill="#4a2a24"/>
<rect x="944.5" y="319.9" width="1" height="1" fill="#20302a"/>
<rect x="968.7" y="356.0" width="1" height="1" fill="#5a5048"/>
<rect x="982.1" y="349.7" width="1" height="1" fill="#4a2a24"/>
<rect x="963.6" y="357.6" width="1" height="1" fill="#5a5048"/>
<rect x="997.6" y="379.5" width="1" height="1" fill="#4a2a24"/>
<rect x="955.7" y="335.9" width="1" height="1" fill="#20302a"/>
<rect x="970.7" y="328.4" width="1" height="1" fill="#4a2a24"/>
<rect x="940.9" y="358.9" width="1" height="1" fill="#5a5048"/>
<rect x="937.8" y="357.5" width="1" height="1" fill="#5a5048"/>
<rect x="963.5" y="415.9" width="1" height="1" fill="#5a5048"/>
<rect x="997.4" y="360.8" width="1" height="1" fill="#4a2a24"/>
<rect x="978.8" y="347.1" width="1" height="1" fill="#4a2a24"/>
<rect x="952.9" y="355.8" width="1" height="1" fill="#5a5048"/>
<rect x="941.3" y="398.0" width="1" height="1" fill="#20302a"/>
<rect x="996.4" y="378.3" width="1" height="1" fill="#4a2a24"/>
<rect x="990.4" y="333.2" width="1" height="1" fill="#4a2a24"/>
<rect x="951.7" y="394.0" width="1" height="1" fill="#20302a"/>
<rect x="957.5" y="394.4" width="1" height="1" fill="#4a2a24"/>
<rect x="979.1" y="382.1" width="1" height="1" fill="#4a2a24"/>
<rect x="957.6" y="386.2" width="1" height="1" fill="#4a2a24"/>
<rect x="988.3" y="341.8" width="1" height="1" fill="#20302a"/>
<rect x="980.5" y="411.6" width="1" height="1" fill="#4a2a24"/>
<rect x="976.2" y="373.6" width="1" height="1" fill="#5a5048"/>
<rect x="964.8" y="393.1" width="1" height="1" fill="#4a2a24"/>
<rect x="977.7" y="361.8" width="1" height="1" fill="#20302a"/>
<rect x="976.1" y="395.6" width="1" height="1" fill="#4a2a24"/>
<rect x="951.8" y="349.9" width="1" height="1" fill="#4a2a24"/>
<rect x="956.8" y="400.1" width="1" height="1" fill="#20302a"/>
<rect x="963.2" y="351.8" width="1" height="1" fill="#4a2a24"/>
<rect x="967.7" y="368.5" width="1" height="1" fill="#5a5048"/>
<rect x="946.9" y="351.6" width="1" height="1" fill="#4a2a24"/>
<rect x="952.4" y="323.0" width="1" height="1" fill="#20302a"/>
<rect x="981.5" y="332.4" width="1" height="1" fill="#20302a"/>
<rect x="967.6" y="409.6" width="1" height="1" fill="#4a2a24"/>
<rect x="974.5" y="393.2" width="1" height="1" fill="#20302a"/>
<rect x="951.6" y="415.6" width="1" height="1" fill="#5a5048"/>
<rect x="944.4" y="359.5" width="1" height="1" fill="#20302a"/>
<rect x="945.7" y="391.7" width="1" height="1" fill="#5a5048"/>
<rect x="975.0" y="319.2" width="1" height="1" fill="#4a2a24"/>
<rect x="997.7" y="331.7" width="1" height="1" fill="#5a5048"/>
<rect x="941.2" y="412.8" width="1" height="1" fill="#4a2a24"/>
<rect x="946.6" y="318.6" width="1" height="1" fill="#4a2a24"/>
<rect x="956.8" y="381.9" width="1" height="1" fill="#5a5048"/>
<rect x="972.4" y="339.0" width="1" height="1" fill="#4a2a24"/>
<rect x="934.0" y="355.9" width="1" height="1" fill="#4a2a24"/>
<rect x="989.6" y="402.5" width="1" height="1" fill="#20302a"/>
<rect x="988.0" y="352.8" width="1" height="1" fill="#5a5048"/>
<rect x="969.7" y="345.4" width="1" height="1" fill="#4a2a24"/>
<rect x="969.4" y="349.3" width="1" height="1" fill="#20302a"/>
<rect x="953.1" y="350.5" width="1" height="1" fill="#5a5048"/>
<rect x="961.2" y="397.1" width="1" height="1" fill="#20302a"/>
<rect x="969.0" y="362.2" width="1" height="1" fill="#5a5048"/>
<rect x="972.7" y="371.9" width="1" height="1" fill="#5a5048"/>
<rect x="996.9" y="376.5" width="1" height="1" fill="#4a2a24"/>
<rect x="987.4" y="381.8" width="1" height="1" fill="#4a2a24"/>
<rect x="941.0" y="372.1" width="1" height="1" fill="#20302a"/>
<rect x="969.1" y="347.9" width="1" height="1" fill="#20302a"/>
<rect x="958.4" y="358.6" width="1" height="1" fill="#5a5048"/>
<rect x="966.1" y="363.4" width="1" height="1" fill="#20302a"/>
<rect x="958.7" y="412.1" width="1" height="1" fill="#5a5048"/>
<rect x="972.7" y="341.2" width="1" height="1" fill="#4a2a24"/>
<rect x="966.3" y="357.0" width="1" height="1" fill="#4a2a24"/>
<rect x="995.4" y="346.1" width="1" height="1" fill="#4a2a24"/>
<rect x="943.3" y="317.4" width="1" height="1" fill="#20302a"/>
<rect x="974.4" y="359.8" width="1" height="1" fill="#4a2a24"/>
<rect x="936.6" y="328.8" width="1" height="1" fill="#4a2a24"/>
<rect x="934.9" y="368.8" width="1" height="1" fill="#4a2a24"/>
<rect x="949.8" y="362.9" width="1" height="1" fill="#5a5048"/>
<rect x="950.0" y="342.0" width="1" height="1" fill="#5a5048"/>
<rect x="980.9" y="343.9" width="1" height="1" fill="#4a2a24"/>
<rect x="973.5" y="362.9" width="1" height="1" fill="#20302a"/>
<rect x="990.1" y="403.9" width="1" height="1" fill="#5a5048"/>
<rect x="935.1" y="327.7" width="1" height="1" fill="#4a2a24"/>
<rect x="968.7" y="348.9" width="1" height="1" fill="#4a2a24"/>
<rect x="981.5" y="317.7" width="1" height="1" fill="#4a2a24"/>
<rect x="957.5" y="390.2" width="1" height="1" fill="#20302a"/>
<rect x="942.6" y="315.3" width="1" height="1" fill="#20302a"/>
<rect x="963.6" y="407.6" width="1" height="1" fill="#20302a"/>
<rect x="969.5" y="316.5" width="1" height="1" fill="#4a2a24"/>
<rect x="972.7" y="384.6" width="1" height="1" fill="#20302a"/>
<rect x="976.2" y="401.7" width="1" height="1" fill="#4a2a24"/>
<rect x="964.9" y="383.9" width="1" height="1" fill="#20302a"/>
<rect x="946.8" y="344.9" width="1" height="1" fill="#5a5048"/>
<rect x="953.7" y="315.3" width="1" height="1" fill="#4a2a24"/>
<rect x="971.8" y="380.5" width="1" height="1" fill="#4a2a24"/>
<rect x="993.2" y="329.4" width="1" height="1" fill="#4a2a24"/>
<rect x="979.2" y="404.8" width="1" height="1" fill="#4a2a24"/>
<rect x="969.0" y="358.0" width="1" height="1" fill="#20302a"/>
<rect x="986.8" y="321.9" width="1" height="1" fill="#5a5048"/>
<rect x="951.4" y="323.6" width="1" height="1" fill="#5a5048"/>
<rect x="977.1" y="317.6" width="1" height="1" fill="#20302a"/>
<rect x="961.9" y="321.9" width="1" height="1" fill="#4a2a24"/>
<rect x="979.6" y="319.9" width="1" height="1" fill="#5a5048"/>
<rect x="948.3" y="380.2" width="1" height="1" fill="#5a5048"/>
<rect x="980.3" y="328.6" width="1" height="1" fill="#4a2a24"/>
<rect x="979.9" y="359.2" width="1" height="1" fill="#5a5048"/>
<rect x="973.7" y="356.8" width="1" height="1" fill="#5a5048"/>
<rect x="938.4" y="336.5" width="1" height="1" fill="#20302a"/>
<rect x="941.0" y="353.3" width="1" height="1" fill="#5a5048"/>
<rect x="952.2" y="372.7" width="1" height="1" fill="#5a5048"/>
<rect x="982.3" y="403.7" width="1" height="1" fill="#5a5048"/>
<rect x="934.6" y="324.2" width="1" height="1" fill="#20302a"/>
<rect x="973.0" y="364.4" width="1" height="1" fill="#20302a"/>
<rect x="958.3" y="320.6" width="1" height="1" fill="#20302a"/>
<rect x="953.2" y="372.4" width="1" height="1" fill="#20302a"/>
<rect x="966.9" y="407.0" width="1" height="1" fill="#20302a"/>
<rect x="969.7" y="337.3" width="1" height="1" fill="#5a5048"/>
<rect x="969.9" y="340.7" width="1" height="1" fill="#4a2a24"/>
<rect x="967.6" y="328.5" width="1" height="1" fill="#5a5048"/>
<rect x="990.1" y="360.8" width="1" height="1" fill="#4a2a24"/>
<rect x="945.7" y="387.0" width="1" height="1" fill="#20302a"/>
<rect x="956.2" y="372.9" width="1" height="1" fill="#5a5048"/>
<rect x="939.9" y="327.6" width="1" height="1" fill="#20302a"/>
<rect x="963.5" y="354.4" width="1" height="1" fill="#4a2a24"/>
<rect x="965.2" y="347.7" width="1" height="1" fill="#20302a"/>
<rect x="935.9" y="388.2" width="1" height="1" fill="#5a5048"/>
<rect x="989.1" y="410.4" width="1" height="1" fill="#4a2a24"/>
<rect x="978.3" y="337.5" width="1" height="1" fill="#5a5048"/>
<rect x="939.4" y="407.1" width="1" height="1" fill="#4a2a24"/>
<rect x="987.3" y="329.1" width="1" height="1" fill="#20302a"/>
<rect x="958.4" y="399.4" width="1" height="1" fill="#4a2a24"/>
<rect x="955.7" y="377.0" width="1" height="1" fill="#4a2a24"/>
<rect x="985.7" y="353.2" width="1" height="1" fill="#20302a"/>
<rect x="988.0" y="380.4" width="1" height="1" fill="#20302a"/>
<rect x="962.2" y="401.0" width="1" height="1" fill="#20302a"/>
<rect x="936.4" y="415.3" width="1" height="1" fill="#5a5048"/>
<rect x="982.1" y="354.9" width="1" height="1" fill="#5a5048"/>
<rect x="936.4" y="333.8" width="1" height="1" fill="#5a5048"/>
<rect x="936.6" y="404.8" width="1" height="1" fill="#4a2a24"/>
<rect x="977.0" y="350.2" width="1" height="1" fill="#4a2a24"/>
<rect x="964.6" y="404.9" width="1" height="1" fill="#20302a"/>
<rect x="993.9" y="347.6" width="1" height="1" fill="#4a2a24"/>
<rect x="940.5" y="330.6" width="1" height="1" fill="#5a5048"/>
<rect x="938.6" y="402.8" width="1" height="1" fill="#4a2a24"/>
<rect x="943.9" y="340.7" width="1" height="1" fill="#4a2a24"/>
<rect x="987.2" y="390.8" width="1" height="1" fill="#20302a"/>
<rect x="949.3" y="363.7" width="1" height="1" fill="#5a5048"/>
<rect x="956.4" y="391.0" width="1" height="1" fill="#4a2a24"/>
<rect x="995.0" y="384.5" width="1" height="1" fill="#20302a"/>
<rect x="963.7" y="400.7" width="1" height="1" fill="#5a5048"/>
<rect x="941.7" y="382.5" width="1" height="1" fill="#4a2a24"/>
<rect x="963.5" y="339.2" width="1" height="1" fill="#5a5048"/>
<rect x="936.2" y="387.2" width="1" height="1" fill="#20302a"/>
<rect x="949.0" y="322.9" width="1" height="1" fill="#4a2a24"/>
<rect x="993.3" y="386.4" width="1" height="1" fill="#20302a"/>
<rect x="954.3" y="362.3" width="1" height="1" fill="#4a2a24"/>
<rect x="938.3" y="415.4" width="1" height="1" fill="#4a2a24"/>
<rect x="944.6" y="339.3" width="1" height="1" fill="#20302a"/>
<rect x="947.6" y="319.4" width="1" height="1" fill="#20302a"/>
<rect x="962.0" y="413.5" width="1" height="1" fill="#5a5048"/>
<rect x="964.0" y="360.8" width="1" height="1" fill="#20302a"/>
<rect x="960.7" y="319.5" width="1" height="1" fill="#20302a"/>
<rect x="988.3" y="399.6" width="1" height="1" fill="#20302a"/>
<rect x="956.8" y="324.5" width="1" height="1" fill="#5a5048"/>
<rect x="949.4" y="396.1" width="1" height="1" fill="#5a5048"/>
<rect x="994.8" y="320.4" width="1" height="1" fill="#5a5048"/>
<rect x="975.9" y="365.2" width="1" height="1" fill="#5a5048"/>
<rect x="937.1" y="399.2" width="1" height="1" fill="#4a2a24"/>
<rect x="953.9" y="320.2" width="1" height="1" fill="#5a5048"/>
<rect x="995.8" y="334.6" width="1" height="1" fill="#20302a"/>
<rect x="967.1" y="355.6" width="1" height="1" fill="#20302a"/>
<rect x="949.2" y="408.6" width="1" height="1" fill="#5a5048"/>
<rect x="939.6" y="414.5" width="1" height="1" fill="#5a5048"/>
<rect x="972.9" y="401.5" width="1" height="1" fill="#5a5048"/>
<rect x="974.6" y="359.6" width="1" height="1" fill="#4a2a24"/>
<rect x="965.6" y="372.7" width="1" height="1" fill="#4a2a24"/>
<rect x="968.0" y="328.4" width="1" height="1" fill="#5a5048"/>
<rect x="993.3" y="346.1" width="1" height="1" fill="#4a2a24"/>
<rect x="991.9" y="416.0" width="1" height="1" fill="#20302a"/>
<rect x="941.5" y="346.5" width="1" height="1" fill="#5a5048"/>
<rect x="984.7" y="341.6" width="1" height="1" fill="#4a2a24"/>
<rect x="954.3" y="328.1" width="1" height="1" fill="#5a5048"/>
<rect x="964.7" y="385.4" width="1" height="1" fill="#4a2a24"/>
<rect x="996.9" y="382.3" width="1" height="1" fill="#4a2a24"/>
<rect x="938.0" y="385.8" width="1" height="1" fill="#5a5048"/>
<rect x="979.7" y="395.4" width="1" height="1" fill="#4a2a24"/>
<rect x="991.6" y="322.3" width="1" height="1" fill="#4a2a24"/>
<rect x="958.7" y="392.7" width="1" height="1" fill="#5a5048"/>
<rect x="992.2" y="381.1" width="1" height="1" fill="#5a5048"/>
<rect x="971.4" y="359.7" width="1" height="1" fill="#20302a"/>
<rect x="976.6" y="411.4" width="1" height="1" fill="#20302a"/>
<rect x="937.1" y="358.2" width="1" height="1" fill="#5a5048"/>
<rect x="986.8" y="353.6" width="1" height="1" fill="#5a5048"/>
<rect x="954.9" y="346.0" width="1" height="1" fill="#5a5048"/>
<rect x="951.1" y="383.3" width="1" height="1" fill="#4a2a24"/>
<rect x="936.2" y="369.8" width="1" height="1" fill="#20302a"/>
<rect x="970.2" y="317.8" width="1" height="1" fill="#5a5048"/>
<rect x="997.0" y="398.5" width="1" height="1" fill="#4a2a24"/>
<rect x="989.9" y="410.9" width="1" height="1" fill="#20302a"/>
<rect x="935.1" y="368.3" width="1" height="1" fill="#5a5048"/>
<rect x="957.6" y="348.4" width="1" height="1" fill="#5a5048"/>
<rect x="944.6" y="377.5" width="1" height="1" fill="#5a5048"/>
<rect x="981.2" y="324.6" width="1" height="1" fill="#20302a"/>
<rect x="973.4" y="378.7" width="1" height="1" fill="#5a5048"/>
<rect x="963.0" y="409.8" width="1" height="1" fill="#4a2a24"/>
<rect x="941.7" y="347.0" width="1" height="1" fill="#5a5048"/>
<rect x="964.0" y="358.8" width="1" height="1" fill="#4a2a24"/>
<rect x="937.1" y="382.5" width="1" height="1" fill="#5a5048"/>
<rect x="968.6" y="412.9" width="1" height="1" fill="#20302a"/>
<rect x="934.1" y="327.8" width="1" height="1" fill="#4a2a24"/>
<rect x="978.6" y="336.0" width="1" height="1" fill="#5a5048"/>
<rect x="936.1" y="373.3" width="1" height="1" fill="#4a2a24"/>
<rect x="979.8" y="350.8" width="1" height="1" fill="#4a2a24"/>
<rect x="948.0" y="343.0" width="1" height="1" fill="#5a5048"/>
<rect x="953.7" y="367.1" width="1" height="1" fill="#5a5048"/>
<rect x="957.8" y="396.7" width="1" height="1" fill="#20302a"/>
<rect x="988.6" y="400.8" width="1" height="1" fill="#20302a"/>
<rect x="966.1" y="350.3" width="1" height="1" fill="#5a5048"/>
<rect x="988.1" y="364.5" width="1" height="1" fill="#5a5048"/>
<rect x="940.1" y="355.1" width="1" height="1" fill="#20302a"/>
<rect x="952.3" y="408.0" width="1" height="1" fill="#4a2a24"/>
<rect x="965.0" y="362.5" width="1" height="1" fill="#20302a"/>
<rect x="974.5" y="395.8" width="1" height="1" fill="#4a2a24"/>
<rect x="978.8" y="325.5" width="1" height="1" fill="#20302a"/>
<rect x="972.1" y="333.7" width="1" height="1" fill="#4a2a24"/>
<rect x="935.4" y="383.5" width="1" height="1" fill="#20302a"/>
<rect x="954.3" y="353.7" width="1" height="1" fill="#4a2a24"/>
<rect x="969.5" y="384.8" width="1" height="1" fill="#4a2a24"/>
<rect x="997.9" y="397.4" width="1" height="1" fill="#20302a"/>
<rect x="970.2" y="321.2" width="1" height="1" fill="#5a5048"/>
<rect x="985.9" y="351.6" width="1" height="1" fill="#20302a"/>
<rect x="935.3" y="392.8" width="1" height="1" fill="#5a5048"/>
<rect x="952.5" y="322.9" width="1" height="1" fill="#5a5048"/>
<rect x="984.3" y="376.7" width="1" height="1" fill="#20302a"/>
<rect x="941.3" y="323.8" width="8" height="8" rx="1" fill="#2cb4bc"/>
<rect x="941.3" y="335.5" width="8" height="8" rx="1" fill="#2cb4bc"/>
<rect x="941.3" y="347.0" width="8" height="8" rx="1" fill="#2cb4bc"/>
<rect x="941.3" y="359.0" width="8" height="8" rx="1" fill="#2cb4bc"/>
<rect x="941.3" y="371.5" width="8" height="8" rx="1" fill="#2cb4bc"/>
<rect x="953.0" y="323.8" width="8" height="8" rx="1" fill="#2cb4bc"/>
<rect x="953.0" y="335.5" width="8" height="8" rx="1" fill="#2cb4bc"/>
<rect x="953.0" y="347.0" width="8" height="8" rx="1" fill="#2cb4bc"/>
<rect x="953.0" y="359.0" width="8" height="8" rx="1" fill="#2cb4bc"/>
<rect x="953.0" y="371.5" width="8" height="8" rx="1" fill="#2cb4bc"/>
<rect x="965.0" y="323.8" width="8" height="8" rx="1" fill="#2cb4bc"/>
<rect x="965.0" y="335.5" width="8" height="8" rx="1" fill="#2cb4bc"/>
<rect x="965.0" y="347.0" width="8" height="8" rx="1" fill="#2cb4bc"/>
<rect x="965.0" y="359.0" width="8" height="8" rx="1" fill="#2cb4bc"/>
<rect x="965.0" y="371.5" width="8" height="8" rx="1" fill="#2cb4bc"/>
<rect x="977.0" y="323.8" width="8" height="8" rx="1" fill="#2cb4bc"/>
<rect x="977.0" y="335.5" width="8" height="8" rx="1" fill="#2cb4bc"/>
<rect x="977.0" y="347.0" width="8" height="8" rx="1" fill="#2cb4bc"/>
<rect x="977.0" y="359.0" width="8" height="8" rx="1" fill="#2cb4bc"/>
<rect x="977.0" y="371.5" width="8" height="8" rx="1" fill="#2cb4bc"/>
<rect x="989.0" y="323.8" width="8" height="8" rx="1" fill="#2cb4bc"/>
<rect x="989.0" y="335.5" width="8" height="8" rx="1" fill="#2cb4bc"/>
<rect x="989.0" y="347.0" width="8" height="8" rx="1" fill="#2cb4bc"/>
<rect x="989.0" y="359.0" width="8" height="8" rx="1" fill="#2cb4bc"/>
<rect x="989.0" y="371.5" width="8" height="8" rx="1" fill="#2cb4bc"/>
<circle cx="969.7" cy="351" r="16.5" fill="#000" stroke="#305040" stroke-width="0.8"/>
<circle cx="898.5" cy="432.4" r="0.8" fill="#021a0c"/>
<circle cx="875.8" cy="425.4" r="0.8" fill="#021a0c"/>
<circle cx="888.4" cy="266.7" r="0.8" fill="#021a0c"/>
<circle cx="880.0" cy="431.2" r="0.8" fill="#021a0c"/>
<circle cx="892.1" cy="322.5" r="0.8" fill="#021a0c"/>
<circle cx="920.7" cy="425.9" r="0.8" fill="#021a0c"/>
<circle cx="909.5" cy="360.0" r="0.8" fill="#021a0c"/>
<circle cx="902.5" cy="276.4" r="0.8" fill="#021a0c"/>
<circle cx="881.9" cy="320.9" r="0.8" fill="#021a0c"/>
<circle cx="919.8" cy="335.4" r="0.8" fill="#021a0c"/>
<circle cx="930.2" cy="379.5" r="0.8" fill="#021a0c"/>
<circle cx="896.5" cy="393.6" r="0.8" fill="#021a0c"/>
<circle cx="905.1" cy="296.9" r="0.8" fill="#021a0c"/>
<circle cx="913.6" cy="317.2" r="0.8" fill="#021a0c"/>
<circle cx="893.5" cy="410.1" r="0.8" fill="#021a0c"/>
<circle cx="925.7" cy="382.5" r="0.8" fill="#021a0c"/>
<circle cx="931.1" cy="304.3" r="0.8" fill="#021a0c"/>
<circle cx="880.7" cy="312.3" r="0.8" fill="#021a0c"/>
<circle cx="920.5" cy="401.9" r="0.8" fill="#021a0c"/>
<circle cx="879.4" cy="429.2" r="0.8" fill="#021a0c"/>
<circle cx="879.4" cy="333.5" r="0.8" fill="#021a0c"/>
<circle cx="885.6" cy="376.7" r="0.8" fill="#021a0c"/>
<circle cx="907.5" cy="371.5" r="0.8" fill="#021a0c"/>
<circle cx="911.5" cy="357.2" r="0.8" fill="#021a0c"/>
<circle cx="898.2" cy="301.1" r="0.8" fill="#021a0c"/>
<circle cx="902.5" cy="366.1" r="0.8" fill="#021a0c"/>
<circle cx="888.9" cy="334.5" r="0.8" fill="#021a0c"/>
<circle cx="879.8" cy="418.3" r="0.8" fill="#021a0c"/>
<circle cx="893.8" cy="335.1" r="0.8" fill="#021a0c"/>
<circle cx="883.5" cy="312.6" r="0.8" fill="#021a0c"/>
<circle cx="906.6" cy="360.3" r="0.8" fill="#021a0c"/>
<circle cx="899.7" cy="318.0" r="0.8" fill="#021a0c"/>
<circle cx="880.8" cy="400.0" r="0.8" fill="#021a0c"/>
<circle cx="893.8" cy="273.6" r="0.8" fill="#021a0c"/>
<circle cx="929.3" cy="284.5" r="0.8" fill="#021a0c"/>
<circle cx="904.6" cy="273.0" r="0.8" fill="#021a0c"/>
<circle cx="885.8" cy="343.3" r="0.8" fill="#021a0c"/>
<circle cx="896.9" cy="420.5" r="0.8" fill="#021a0c"/>
<circle cx="925.9" cy="369.5" r="0.8" fill="#021a0c"/>
<circle cx="920.5" cy="409.5" r="0.8" fill="#021a0c"/>
<circle cx="888" cy="438" r="5" fill="none" stroke="#2ad8e0" stroke-width="1.1"/>
</svg>
<div class="t sx" style="left:825.5px;top:309.0px;font-size:12.5px;font-weight:bold;color:#ff2410;transform:scaleX(0.830)">Pad ID:1068 FovNo:13</div>
<div class="t sx" style="left:825.5px;top:325.3px;font-size:12.5px;font-weight:bold;color:#ff2410;transform:scaleX(0.914)">SizeX/Y(mm):0.200/1.800</div>
<div class="t sx" style="left:825.5px;top:341.6px;font-size:12.5px;font-weight:bold;color:#ff2410;transform:scaleX(0.866)">Missing:0.0</div>
<div class="t sx" style="left:825.5px;top:357.9px;font-size:12.5px;font-weight:bold;color:#ff2410;transform:scaleX(0.892)">ComponentID_ArrayID</div>
<div class="t sx" style="left:825.5px;top:374.2px;font-size:12.5px;font-weight:bold;color:#ff2410;transform:scaleX(0.798)">NO.:NULL_1</div>
<div class="t sx" style="left:825.5px;top:390.5px;font-size:12.5px;font-weight:bold;color:#ff2410;transform:scaleX(0.879)">StencilHeight(MM):0.1</div>
<div class="t sx" style="left:825.5px;top:406.8px;font-size:12.5px;font-weight:bold;color:#ff2410;transform:scaleX(0.836)">Pad Group:1fn</div>
<!-- /FOVIMG -->

<!-- tabs Run/Defect -->
<div class="t" style="left:7px;top:97.5px;font-size:8px;letter-spacing:-0.4px;color:#555">Run</div>
<div class="a" style="left:29px;top:94px;width:40px;height:15px;background:#f2f4f7;border-radius:2px 2px 0 0"></div>
<div class="t" style="left:33px;top:97.5px;font-size:8.5px;font-weight:bold;letter-spacing:-0.3px;color:#333">Defect</div>
<div class="a" style="left:0;top:108px;width:512px;height:2px;background:#fafafa"></div>

<!-- pad info -->
<div class="t" style="left:7px;top:515px;font-size:7.5px;letter-spacing:-0.35px;color:#555">Pad Info:</div>
<div class="a" style="left:119px;top:513px;width:66px;height:11px;background:#e6e6e6;border:1px solid #d6d6d6"></div>
<div class="t" style="left:128px;top:515px;font-size:7.5px;letter-spacing:-0.3px;color:#444">Save Pad Data</div>
<div class="a" style="left:3px;top:523px;width:195px;height:80px;background:#c8c8c8;border-top:2px solid #a8a8a8"></div>
<div class="a" style="left:186px;top:525px;width:11px;height:78px;background:#e8e8e8"></div>
<div class="a" style="left:187px;top:530px;width:9px;height:29px;background:#d0d0d0"></div>
<svg class="a" style="left:186px;top:525px" width="11" height="78"><path d="M3 8l2.5-2.5L8 8" fill="none" stroke="#555" stroke-width="1"/><path d="M3 69l2.5 2.5L8 69" fill="none" stroke="#555" stroke-width="1"/></svg>
<div class="t" style="left:4px;top:527.5px;font-family:'Liberation Mono',monospace;font-size:7.1px;color:#3aa03a;">Project&nbsp;Name&nbsp;&nbsp;:Spec&nbsp;&nbsp;&nbsp;&nbsp;&nbsp;&nbsp;&nbsp;&nbsp;|MeasurementRes</div>
<div class="t" style="left:4px;top:537.5px;font-family:'Liberation Mono',monospace;font-size:7.1px;color:#ee3020;font-weight:bold;">Volume(%)&nbsp;&nbsp;&nbsp;&nbsp;&nbsp;:50.0&nbsp;&#x2dc;&nbsp;180.0|0.0</div>
<div class="t" style="left:4px;top:547.5px;font-family:'Liberation Mono',monospace;font-size:7.1px;color:#ee3020;font-weight:bold;">Height%&nbsp;&nbsp;&nbsp;&nbsp;&nbsp;&nbsp;&nbsp;:50.0&nbsp;&#x2dc;&nbsp;180.0|0.0</div>
<div class="t" style="left:4px;top:557.5px;font-family:'Liberation Mono',monospace;font-size:7.1px;color:#ee3020;font-weight:bold;">Area(%)&nbsp;&nbsp;&nbsp;&nbsp;&nbsp;&nbsp;&nbsp;:50.0&nbsp;&#x2dc;&nbsp;180.0|0.0</div>
<div class="t" style="left:4px;top:567.5px;font-family:'Liberation Mono',monospace;font-size:7.1px;color:#333;">MaxHeightum&nbsp;&nbsp;&nbsp;:&nbsp;&nbsp;&nbsp;&nbsp;&nbsp;&nbsp;&nbsp;&nbsp;&nbsp;&nbsp;&nbsp;&nbsp;|0.0</div>
<div class="t" style="left:4px;top:577.5px;font-family:'Liberation Mono',monospace;font-size:7.1px;color:#333;">Shapeum&nbsp;&nbsp;&nbsp;&nbsp;&nbsp;&nbsp;&nbsp;:100&nbsp;&nbsp;&nbsp;&nbsp;&nbsp;&nbsp;&nbsp;&nbsp;&nbsp;|0</div>
<div class="t" style="left:4px;top:587.5px;font-family:'Liberation Mono',monospace;font-size:7.1px;color:#333;">Shift&nbsp;X(um/%)&nbsp;:60.0/30.0&nbsp;&nbsp;&nbsp;|0.0/0.0</div>
<div class="t" style="left:4px;top:597.5px;font-family:'Liberation Mono',monospace;font-size:7.1px;color:#333;">Shift&nbsp;Y(um/%)&nbsp;:540.0/30.0&nbsp;&nbsp;|0.0/0.0</div>
<div class="t" style="left:205px;top:515px;font-size:7.5px;letter-spacing:-0.35px;color:#555">Defect List:</div>
<div class="a" style="left:202px;top:524px;width:301px;height:81px;background:#fff;border:1px solid #555"></div>
<div class="a" style="left:486px;top:525px;width:16px;height:79px;background:#ececec"></div>
<div class="a" style="left:486px;top:525px;width:5px;height:79px;background:#bdbdbd"></div>
<div class="a" style="left:492px;top:536px;width:9px;height:10px;background:#d4d4d4"></div>
<svg class="a" style="left:491px;top:525px" width="11" height="11"><path d="M3 7l2.5-2.5L8 7" fill="none" stroke="#555" stroke-width="1"/></svg>
<div class="a" style="left:203px;top:536px;width:284px;height:12px;background:#0078d7"></div>
<div class="a" style="left:245px;top:525px;width:1px;height:11px;background:#dcdcdc"></div><div class="a" style="left:245px;top:536px;width:1px;height:68px;background:#666"></div>
<div class="a" style="left:282px;top:525px;width:1px;height:11px;background:#dcdcdc"></div><div class="a" style="left:282px;top:536px;width:1px;height:68px;background:#666"></div>
<div class="a" style="left:305px;top:525px;width:1px;height:11px;background:#dcdcdc"></div><div class="a" style="left:305px;top:536px;width:1px;height:68px;background:#666"></div>
<div class="a" style="left:342px;top:525px;width:1px;height:11px;background:#dcdcdc"></div><div class="a" style="left:342px;top:536px;width:1px;height:68px;background:#666"></div>
<div class="a" style="left:390px;top:525px;width:1px;height:11px;background:#dcdcdc"></div><div class="a" style="left:390px;top:536px;width:1px;height:68px;background:#666"></div>
<div class="a" style="left:437px;top:525px;width:1px;height:11px;background:#dcdcdc"></div><div class="a" style="left:437px;top:536px;width:1px;height:68px;background:#666"></div>
<div class="a" style="left:203px;top:536px;width:284px;height:1px;background:#444"></div>
<div class="a" style="left:203px;top:548px;width:284px;height:1px;background:#444"></div>
<div class="a" style="left:203px;top:560px;width:284px;height:1px;background:#444"></div>
<div class="a" style="left:203px;top:572px;width:284px;height:1px;background:#444"></div>
<div class="a" style="left:203px;top:584px;width:284px;height:1px;background:#444"></div>
<div class="a" style="left:203px;top:596px;width:284px;height:1px;background:#444"></div>
<div class="t" style="left:206px;top:526.5px;font-size:7.2px;letter-spacing:-0.25px;color:#4a4a4a">Pad ID</div>
<div class="t" style="left:249px;top:526.5px;width:32px;overflow:hidden;font-size:7.2px;letter-spacing:-0.25px;color:#4a4a4a">Componen</div>
<div class="t" style="left:286px;top:526.5px;font-size:7.2px;letter-spacing:-0.25px;color:#4a4a4a">Pin</div>
<div class="t" style="left:311px;top:526.5px;font-size:7.2px;letter-spacing:-0.25px;color:#4a4a4a">Package</div>
<div class="t" style="left:346px;top:526.5px;font-size:7.2px;letter-spacing:-0.25px;color:#4a4a4a">Defect</div>
<div class="t" style="left:394px;top:526.5px;font-size:7.2px;letter-spacing:-0.25px;color:#4a4a4a">Judged</div>
<div class="t" style="left:442px;top:526.5px;font-size:7.2px;letter-spacing:-0.25px;color:#4a4a4a">Confirmed</div>
<div class="t" style="left:205px;top:539px;font-size:7.5px;color:#fff">1068</div>
<div class="t" style="left:284px;top:539px;font-size:7.5px;color:#fff">0</div>
<div class="t" style="left:344px;top:539px;font-size:7.5px;color:#fff;letter-spacing:-0.3px">Missing</div>
<div class="t" style="left:392px;top:539px;font-size:7.5px;color:#fff">NG</div>
<div class="a" style="left:456px;top:538px;width:9px;height:9px;background:#fff;border:1px solid #fff"></div>
<div class="t" style="left:205px;top:551px;font-size:7.5px;color:#444;letter-spacing:-0.15px">898</div>
<div class="t" style="left:284px;top:551px;font-size:7.5px;color:#444;letter-spacing:-0.15px">0</div>
<div class="t" style="left:344px;top:551px;font-size:7.5px;color:#333;letter-spacing:-0.3px">Insufficient</div>
<div class="t" style="left:392px;top:551px;font-size:7.5px;color:#444;letter-spacing:-0.15px">NG</div>
<div class="a" style="left:456px;top:550px;width:8px;height:9px;background:#fff;border:1px solid #777"></div>
<div class="t" style="left:205px;top:563px;font-size:7.5px;color:#444;letter-spacing:-0.15px">769</div>
<div class="t" style="left:284px;top:563px;font-size:7.5px;color:#444;letter-spacing:-0.15px">0</div>
<div class="t" style="left:344px;top:563px;font-size:7.5px;color:#333;letter-spacing:-0.3px">Insufficient</div>
<div class="t" style="left:392px;top:563px;font-size:7.5px;color:#444;letter-spacing:-0.15px">NG</div>
<div class="a" style="left:456px;top:562px;width:8px;height:9px;background:#fff;border:1px solid #777"></div>
<div class="t" style="left:205px;top:575px;font-size:7.5px;color:#444;letter-spacing:-0.15px">630</div>
<div class="t" style="left:284px;top:575px;font-size:7.5px;color:#444;letter-spacing:-0.15px">0</div>
<div class="t" style="left:344px;top:575px;font-size:7.5px;color:#333;letter-spacing:-0.3px">Bridge</div>
<div class="t" style="left:392px;top:575px;font-size:7.5px;color:#444;letter-spacing:-0.15px">NG</div>
<div class="a" style="left:456px;top:574px;width:8px;height:9px;background:#fff;border:1px solid #777"></div>
<div class="t" style="left:205px;top:587px;font-size:7.5px;color:#444;letter-spacing:-0.15px">632</div>
<div class="t" style="left:284px;top:587px;font-size:7.5px;color:#444;letter-spacing:-0.15px">0</div>
<div class="t" style="left:344px;top:587px;font-size:7.5px;color:#333;letter-spacing:-0.3px">Bridge</div>
<div class="t" style="left:392px;top:587px;font-size:7.5px;color:#444;letter-spacing:-0.15px">NG</div>
<div class="a" style="left:456px;top:586px;width:8px;height:9px;background:#fff;border:1px solid #777"></div>
<div class="t" style="left:205px;top:599px;font-size:7.5px;color:#444;letter-spacing:-0.15px">633</div>
<div class="t" style="left:284px;top:599px;font-size:7.5px;color:#444;letter-spacing:-0.15px">0</div>
<div class="t" style="left:344px;top:599px;font-size:7.5px;color:#333;letter-spacing:-0.3px">Bridge</div>
<div class="t" style="left:392px;top:599px;font-size:7.5px;color:#444;letter-spacing:-0.15px">NG</div>
<div class="a" style="left:456px;top:598px;width:8px;height:9px;background:#fff;border:1px solid #777"></div>
<div class="a" style="left:203px;top:604px;width:300px;height:21px;background:#f0f0f0;border-top:1px solid #555"></div>
<!-- buttons -->
<div class="a" style="left:823px;top:500px;width:84px;height:23px;background:#e3e3e3;border:1px solid #cfcfcf"></div>
<div class="t" style="left:852px;top:508px;font-size:7.5px;color:#333;letter-spacing:-0.3px">PCB Out</div>
<div class="a" style="left:911px;top:500px;width:89px;height:24px;background:#ff1e00"></div>
<div class="a" style="left:820px;top:528px;width:9px;height:9px;border:1px solid #555;background:#fff"></div>
<svg class="a" style="left:820px;top:528px" width="9" height="9"><path d="M1.5 4.5l2 2.2l4-5" fill="none" stroke="#333" stroke-width="1"/></svg>
<div class="t" style="left:832px;top:529px;font-size:7.5px;color:#333;letter-spacing:-0.2px">Show 3D</div>
<div class="a" style="left:822px;top:543px;width:50px;height:16px;background:#e3e3e3;border:1px solid #cfcfcf"></div>
<div class="t" style="left:832px;top:547px;font-size:7.5px;color:#333;letter-spacing:-0.4px">Fine Tune</div>
<div class="a" style="left:822px;top:562px;width:50px;height:17px;background:#e3e3e3;border:1px solid #cfcfcf"></div>
<div class="a" style="left:824px;top:564px;width:46px;height:13px;background:#00e000"></div>
<div class="t" style="left:830px;top:567px;font-size:7.5px;color:#333;letter-spacing:-0.4px">Group Pass</div>
<div class="a" style="left:822px;top:581px;width:50px;height:17px;background:#e3e3e3;border:1px solid #cfcfcf"></div>
<div class="a" style="left:824px;top:583px;width:46px;height:13px;background:#ff1a00"></div>
<div class="t" style="left:833px;top:586px;font-size:7.5px;color:#a00;letter-spacing:-0.4px">Group NG</div>
<div class="a" style="left:912px;top:526px;width:47px;height:16px;background:#e3e3e3;border:1px solid #d0d0d0"></div>
<div class="t" style="left:927px;top:529px;font-size:11px;color:#222">&lt;&lt;</div>
<div class="a" style="left:964px;top:526px;width:40px;height:16px;background:#e3e3e3;border:1px solid #d0d0d0"></div>
<div class="t" style="left:983px;top:529px;font-size:11px;color:#222">&lt;</div>
<div class="a" style="left:912px;top:545px;width:90px;height:18px;background:#e3e3e3;border:1px solid #d0d0d0"></div>
<div class="a" style="left:914px;top:547px;width:88px;height:14px;background:#00e000"></div>
<div class="t" style="left:946px;top:548.5px;font-size:12px;color:#111">Pass</div>
<div class="a" style="left:912px;top:564px;width:72px;height:18px;background:#e3e3e3;border:1px solid #d0d0d0"></div>
<div class="a" style="left:914px;top:566px;width:68px;height:14px;background:#00e000"></div>
<div class="t" style="left:924px;top:567.5px;font-size:12px;color:#111">All Pass</div>
<div class="a" style="left:991px;top:564px;width:12px;height:18px;background:#e3e3e3;border:1px solid #d0d0d0"></div>
<div class="t" style="left:994px;top:566px;font-size:12px;color:#111">0</div>
<div class="a" style="left:912px;top:584px;width:90px;height:22px;background:#e3e3e3;border:1px solid #d0d0d0"></div>

<!-- dialog -->
<div class="a" style="left:47px;top:47px;width:478px;height:227px;background:#f0f0f0;box-shadow:0 0 2px rgba(0,0,0,.22)"></div>
<div class="a" style="left:47px;top:47px;width:478px;height:19px;background:#fff"></div>
<svg class="a" style="left:49px;top:50px" width="11" height="10"><rect x="0.5" y="3.5" width="5" height="5" fill="#d86048"/><rect x="3.5" y="1" width="6" height="5" fill="#f0d060"/><rect x="4" y="5.5" width="5.5" height="3.5" fill="#7098d8"/></svg>
<div class="t sx" style="left:62px;top:50.5px;font-size:8.7px;color:#b2b2b2;transform:scaleX(0.778)">Pad ID:1068&nbsp; SizeX/Y(mm):0.200/1.800</div>
<div class="a" style="left:453px;top:55px;width:8px;height:1px;background:#999"></div>
<div class="a" style="left:480px;top:51px;width:8px;height:8px;border:1px solid #999"></div>
<svg class="a" style="left:507px;top:50px" width="10" height="10"><path d="M1 1L9 9M9 1L1 9" stroke="#999" stroke-width="1"/></svg>
<div class="a" style="left:47px;top:66px;width:217px;height:197px;background:#000"></div>
<!-- DLGPAD --><svg class="a" style="left:130px;top:130px" width="50" height="80" viewBox="130 130 50 80"><polygon points="142.9,140.6 169,140.6 172,202 139,202" fill="#0c3822"/><path d="M155 141 h13 v40 a6 6 0 0 1 -13 0z" fill="#165a36"/><path d="M160 202 L172 190 L172 202z" fill="#165a36"/><rect x="144" y="144" width="2" height="48" fill="#6a2a20"/><rect x="145.2" y="144.5" width="6.5" height="47.2" rx="3.2" fill="url(#dp)"/></svg><!-- /DLGPAD -->
<div class="a" style="left:269px;top:123px;width:16px;height:140px;background:#e1e1e1;border:1px solid #cfcfcf"></div>
<div class="t" style="left:272px;top:188px;font-size:9px;color:#555">&lt;&lt;</div>
<div class="a" style="left:293px;top:67px;width:208px;height:197px;background:#fafafa"></div>
<div class="a" style="left:294px;top:70px;width:144px;height:161px;border:1px solid #e2e2e2;background:#fff"></div>
<div class="t" style="left:297px;top:66px;font-family:'Liberation Mono',monospace;font-size:7.5px;color:#333;background:#fff;padding:0 1px">PAD 3D VIEW</div>
<svg class="a" style="left:293px;top:67px" width="146" height="165" viewBox="293 67 146 165">
<path d="M321.2 93.5 L407.5 92.3 L427.7 154 L408.7 211.2 L323.5 211.2 Z" stroke="#bdbdbd" stroke-width="0.75" fill="none"/>
<path d="M349 93.3 L350.4 211.2 M376 92.9 L377.3 211.2 M407.5 92.3 L402 152 L408.7 211.2" stroke="#bdbdbd" stroke-width="0.75" fill="none"/>
<path d="M322.4 126 L402 126 M323 151.7 L402 151.7 M323.2 169.7 L402 169.7 M323.4 187.6 L404 187.6" stroke="#bdbdbd" stroke-width="0.75" fill="none"/>
<path d="M402 126 L416 126 M402 151.7 L427 154 M404 187.6 L416 187.6" stroke="#c8c8c8" stroke-width="0.6" fill="none"/>
<text x="320" y="89" font-size="3" fill="#aaa" font-family="Liberation Sans">0</text>
<text x="347" y="89" font-size="3" fill="#aaa" font-family="Liberation Sans">100</text>
<text x="374" y="89" font-size="3" fill="#aaa" font-family="Liberation Sans">200</text>
<text x="403" y="89" font-size="3" fill="#aaa" font-family="Liberation Sans">300</text>
<text x="322" y="215" font-size="3" fill="#aaa" font-family="Liberation Sans">0</text>
<text x="348" y="215" font-size="3" fill="#aaa" font-family="Liberation Sans">100</text>
<text x="375" y="215" font-size="3" fill="#aaa" font-family="Liberation Sans">200</text>
<text x="404" y="215" font-size="3" fill="#aaa" font-family="Liberation Sans">300</text>
<rect x="323.5" y="151.3" width="30.2" height="60" fill="#000"/>
<path d="M332.4 137 L335 143 L338 160 L339.5 185 L339 200 L333 203 L325 200 L326 180 L329 155 Z" fill="#1a3a5a"/>
<rect x="332.2" y="153.2" width="0.9" height="0.9" fill="#20a0a0"/>
<rect x="330.7" y="196.6" width="0.9" height="0.9" fill="#40b040"/>
<rect x="330.4" y="142.2" width="0.9" height="0.9" fill="#60d040"/>
<rect x="330.3" y="154.6" width="0.9" height="0.9" fill="#60d040"/>
<rect x="332.0" y="172.6" width="0.9" height="0.9" fill="#60d040"/>
<rect x="327.7" y="178.9" width="0.9" height="0.9" fill="#3050c0"/>
<rect x="331.5" y="193.6" width="0.9" height="0.9" fill="#2060d0"/>
<rect x="326.5" y="181.0" width="0.9" height="0.9" fill="#40b040"/>
<rect x="333.0" y="140.7" width="0.9" height="0.9" fill="#20a0a0"/>
<rect x="333.5" y="168.3" width="0.9" height="0.9" fill="#60d040"/>
<rect x="336.3" y="183.7" width="0.9" height="0.9" fill="#1040a0"/>
<rect x="332.2" y="184.6" width="0.9" height="0.9" fill="#3050c0"/>
<rect x="325.6" y="194.2" width="0.9" height="0.9" fill="#3050c0"/>
<rect x="329.4" y="169.7" width="0.9" height="0.9" fill="#60d040"/>
<rect x="335.7" y="187.9" width="0.9" height="0.9" fill="#1040a0"/>
<rect x="330.5" y="170.5" width="0.9" height="0.9" fill="#20a0a0"/>
<rect x="330.7" y="172.2" width="0.9" height="0.9" fill="#80e060"/>
<rect x="333.7" y="195.9" width="0.9" height="0.9" fill="#2060d0"/>
<rect x="337.8" y="192.8" width="0.9" height="0.9" fill="#3050c0"/>
<rect x="329.4" y="182.7" width="0.9" height="0.9" fill="#40b040"/>
<rect x="332.1" y="195.9" width="0.9" height="0.9" fill="#3050c0"/>
<rect x="336.7" y="178.5" width="0.9" height="0.9" fill="#20a0c0"/>
<rect x="329.1" y="156.2" width="0.9" height="0.9" fill="#60d040"/>
<rect x="333.2" y="143.7" width="0.9" height="0.9" fill="#60d040"/>
<rect x="324.4" y="195.4" width="0.9" height="0.9" fill="#1040a0"/>
<rect x="335.9" y="187.2" width="0.9" height="0.9" fill="#2060d0"/>
<rect x="334.2" y="176.7" width="0.9" height="0.9" fill="#1040a0"/>
<rect x="329.3" y="184.0" width="0.9" height="0.9" fill="#20a0c0"/>
<rect x="336.1" y="170.3" width="0.9" height="0.9" fill="#20a0a0"/>
<rect x="331.1" y="138.5" width="0.9" height="0.9" fill="#2080c0"/>
<rect x="331.2" y="140.0" width="0.9" height="0.9" fill="#60d040"/>
<rect x="330.3" y="156.7" width="0.9" height="0.9" fill="#40c040"/>
<rect x="328.6" y="200.7" width="0.9" height="0.9" fill="#20a0c0"/>
<rect x="336.9" y="199.4" width="0.9" height="0.9" fill="#1040a0"/>
<rect x="334.5" y="162.1" width="0.9" height="0.9" fill="#60d040"/>
<rect x="332.5" y="179.2" width="0.9" height="0.9" fill="#40b040"/>
<rect x="333.9" y="144.6" width="0.9" height="0.9" fill="#2080c0"/>
<rect x="332.7" y="155.4" width="0.9" height="0.9" fill="#80e060"/>
<rect x="330.2" y="197.9" width="0.9" height="0.9" fill="#20a0c0"/>
<rect x="332.0" y="171.4" width="0.9" height="0.9" fill="#40c040"/>
<rect x="337.4" y="188.5" width="0.9" height="0.9" fill="#20a0c0"/>
<rect x="332.5" y="139.3" width="0.9" height="0.9" fill="#80e060"/>
<rect x="332.5" y="141.8" width="0.9" height="0.9" fill="#60d040"/>
<rect x="334.7" y="160.6" width="0.9" height="0.9" fill="#2080c0"/>
<rect x="334.1" y="183.2" width="0.9" height="0.9" fill="#2060d0"/>
<rect x="336.1" y="175.7" width="0.9" height="0.9" fill="#2060d0"/>
<rect x="327.3" y="199.7" width="0.9" height="0.9" fill="#1040a0"/>
<rect x="332.5" y="157.1" width="0.9" height="0.9" fill="#80e060"/>
<rect x="330.4" y="161.3" width="0.9" height="0.9" fill="#20a0a0"/>
<rect x="328.0" y="192.0" width="0.9" height="0.9" fill="#1040a0"/>
<rect x="333.3" y="144.7" width="0.9" height="0.9" fill="#2080c0"/>
<rect x="327.2" y="181.8" width="0.9" height="0.9" fill="#40b040"/>
<rect x="333.6" y="152.2" width="0.9" height="0.9" fill="#80e060"/>
<rect x="333.0" y="159.0" width="0.9" height="0.9" fill="#40c040"/>
<rect x="331.4" y="144.5" width="0.9" height="0.9" fill="#20a0a0"/>
<rect x="328.3" y="181.2" width="0.9" height="0.9" fill="#3050c0"/>
<rect x="333.0" y="143.1" width="0.9" height="0.9" fill="#80e060"/>
<rect x="330.5" y="194.6" width="0.9" height="0.9" fill="#3050c0"/>
<rect x="325.3" y="188.4" width="0.9" height="0.9" fill="#3050c0"/>
<rect x="334.0" y="158.2" width="0.9" height="0.9" fill="#2080c0"/>
<rect x="330.9" y="149.7" width="0.9" height="0.9" fill="#40c040"/>
<rect x="329.2" y="189.6" width="0.9" height="0.9" fill="#3050c0"/>
<rect x="331.8" y="165.0" width="0.9" height="0.9" fill="#20a0a0"/>
<rect x="332.8" y="167.7" width="0.9" height="0.9" fill="#20a0a0"/>
<rect x="331.0" y="164.9" width="0.9" height="0.9" fill="#60d040"/>
<rect x="329.7" y="148.0" width="0.9" height="0.9" fill="#2080c0"/>
<rect x="330.0" y="201.2" width="0.9" height="0.9" fill="#3050c0"/>
<rect x="332.0" y="140.1" width="0.9" height="0.9" fill="#2080c0"/>
<rect x="331.7" y="199.7" width="0.9" height="0.9" fill="#3050c0"/>
<rect x="336.0" y="193.1" width="0.9" height="0.9" fill="#20a0c0"/>
<rect x="331.0" y="145.7" width="0.9" height="0.9" fill="#40c040"/>
<rect x="333.9" y="195.8" width="0.9" height="0.9" fill="#3050c0"/>
<rect x="336.7" y="195.4" width="0.9" height="0.9" fill="#40b040"/>
<rect x="332.1" y="141.2" width="0.9" height="0.9" fill="#40c040"/>
<rect x="331.0" y="149.0" width="0.9" height="0.9" fill="#40c040"/>
<rect x="330.8" y="171.6" width="0.9" height="0.9" fill="#2080c0"/>
<rect x="330.5" y="145.3" width="0.9" height="0.9" fill="#2080c0"/>
<rect x="334.1" y="168.5" width="0.9" height="0.9" fill="#20a0a0"/>
<rect x="329.9" y="152.1" width="0.9" height="0.9" fill="#40c040"/>
<rect x="333.4" y="149.0" width="0.9" height="0.9" fill="#80e060"/>
<rect x="324.7" y="190.7" width="0.9" height="0.9" fill="#40b040"/>
<rect x="325.0" y="193.2" width="0.9" height="0.9" fill="#20a0c0"/>
<rect x="332.6" y="153.9" width="0.9" height="0.9" fill="#2080c0"/>
<rect x="331.5" y="165.1" width="0.9" height="0.9" fill="#40c040"/>
<rect x="334.9" y="192.8" width="0.9" height="0.9" fill="#2060d0"/>
<rect x="330.2" y="146.0" width="0.9" height="0.9" fill="#40c040"/>
<rect x="325.6" y="192.7" width="0.9" height="0.9" fill="#40b040"/>
<rect x="328.6" y="169.4" width="0.9" height="0.9" fill="#40c040"/>
<rect x="332.8" y="160.5" width="0.9" height="0.9" fill="#2080c0"/>
<rect x="330.3" y="157.5" width="0.9" height="0.9" fill="#20a0a0"/>
<rect x="328.7" y="165.4" width="0.9" height="0.9" fill="#40c040"/>
<rect x="329.9" y="183.8" width="0.9" height="0.9" fill="#2060d0"/>
<rect x="327.0" y="174.3" width="0.9" height="0.9" fill="#1040a0"/>
<rect x="334.4" y="176.7" width="0.9" height="0.9" fill="#1040a0"/>
<rect x="326.5" y="178.7" width="0.9" height="0.9" fill="#1040a0"/>
<rect x="332.5" y="141.4" width="0.9" height="0.9" fill="#20a0a0"/>
<rect x="333.2" y="164.9" width="0.9" height="0.9" fill="#60d040"/>
<rect x="331.4" y="139.1" width="0.9" height="0.9" fill="#20a0a0"/>
<rect x="326.4" y="182.5" width="0.9" height="0.9" fill="#1040a0"/>
<rect x="329.9" y="152.4" width="0.9" height="0.9" fill="#40c040"/>
<rect x="329.2" y="197.9" width="0.9" height="0.9" fill="#40b040"/>
<rect x="328.2" y="188.6" width="0.9" height="0.9" fill="#1040a0"/>
<rect x="336.4" y="182.2" width="0.9" height="0.9" fill="#40b040"/>
<rect x="333.4" y="188.7" width="0.9" height="0.9" fill="#20a0c0"/>
<rect x="327.6" y="174.1" width="0.9" height="0.9" fill="#40b040"/>
<rect x="331.0" y="183.9" width="0.9" height="0.9" fill="#3050c0"/>
<rect x="325.6" y="187.6" width="0.9" height="0.9" fill="#2060d0"/>
<rect x="333.1" y="174.1" width="0.9" height="0.9" fill="#1040a0"/>
<rect x="329.6" y="149.5" width="0.9" height="0.9" fill="#40c040"/>
<rect x="331.0" y="139.6" width="0.9" height="0.9" fill="#60d040"/>
<rect x="337.2" y="191.5" width="0.9" height="0.9" fill="#40b040"/>
<rect x="329.2" y="157.2" width="0.9" height="0.9" fill="#2080c0"/>
<rect x="333.5" y="170.7" width="0.9" height="0.9" fill="#40c040"/>
<rect x="327.6" y="173.5" width="0.9" height="0.9" fill="#40b040"/>
<rect x="331.5" y="141.9" width="0.9" height="0.9" fill="#2080c0"/>
<rect x="329.9" y="149.5" width="0.9" height="0.9" fill="#80e060"/>
<rect x="330.9" y="179.3" width="0.9" height="0.9" fill="#1040a0"/>
<rect x="332.5" y="154.2" width="0.9" height="0.9" fill="#20a0a0"/>
<rect x="336.1" y="173.6" width="0.9" height="0.9" fill="#1040a0"/>
<rect x="335.8" y="170.0" width="0.9" height="0.9" fill="#60d040"/>
<rect x="337.4" y="192.0" width="0.9" height="0.9" fill="#1040a0"/>
<rect x="334.3" y="182.2" width="0.9" height="0.9" fill="#40b040"/>
<rect x="327.5" y="181.9" width="0.9" height="0.9" fill="#1040a0"/>
<rect x="326.2" y="195.4" width="0.9" height="0.9" fill="#2060d0"/>
<rect x="331.4" y="169.9" width="0.9" height="0.9" fill="#2080c0"/>
<rect x="332.3" y="198.8" width="0.9" height="0.9" fill="#3050c0"/>
<rect x="333.1" y="146.7" width="0.9" height="0.9" fill="#80e060"/>
<rect x="329.6" y="175.5" width="0.9" height="0.9" fill="#3050c0"/>
<rect x="331.7" y="192.5" width="0.9" height="0.9" fill="#20a0c0"/>
<rect x="335.4" y="181.0" width="0.9" height="0.9" fill="#40b040"/>
<rect x="332.3" y="192.6" width="0.9" height="0.9" fill="#20a0c0"/>
<rect x="328.4" y="194.9" width="0.9" height="0.9" fill="#20a0c0"/>
<rect x="330.6" y="168.7" width="0.9" height="0.9" fill="#80e060"/>
<rect x="328.9" y="174.5" width="0.9" height="0.9" fill="#1040a0"/>
<rect x="326.8" y="187.5" width="0.9" height="0.9" fill="#1040a0"/>
<rect x="327.9" y="182.9" width="0.9" height="0.9" fill="#40b040"/>
<rect x="335.5" y="191.4" width="0.9" height="0.9" fill="#40b040"/>
<rect x="333.6" y="139.8" width="0.9" height="0.9" fill="#40c040"/>
<rect x="329.8" y="192.8" width="0.9" height="0.9" fill="#2060d0"/>
<rect x="329.3" y="167.9" width="0.9" height="0.9" fill="#80e060"/>
<rect x="334.4" y="179.5" width="0.9" height="0.9" fill="#2060d0"/>
<rect x="336.3" y="199.4" width="0.9" height="0.9" fill="#3050c0"/>
<rect x="335.0" y="195.0" width="0.9" height="0.9" fill="#3050c0"/>
<rect x="333.0" y="150.0" width="0.9" height="0.9" fill="#40c040"/>
<rect x="327.7" y="195.6" width="0.9" height="0.9" fill="#2060d0"/>
<rect x="331.3" y="158.1" width="0.9" height="0.9" fill="#40c040"/>
<rect x="331.1" y="145.5" width="0.9" height="0.9" fill="#20a0a0"/>
<rect x="332.0" y="140.3" width="0.9" height="0.9" fill="#20a0a0"/>
<rect x="331.7" y="138.4" width="0.9" height="0.9" fill="#60d040"/>
<rect x="328.6" y="162.3" width="0.9" height="0.9" fill="#2080c0"/>
<rect x="331.2" y="185.5" width="0.9" height="0.9" fill="#3050c0"/>
<rect x="327.9" y="172.8" width="0.9" height="0.9" fill="#20a0c0"/>
<rect x="331.9" y="142.9" width="0.9" height="0.9" fill="#60d040"/>
<rect x="336.8" y="194.8" width="0.9" height="0.9" fill="#2060d0"/>
<rect x="333.4" y="171.8" width="0.9" height="0.9" fill="#20a0a0"/>
<rect x="328.8" y="186.5" width="0.9" height="0.9" fill="#20a0c0"/>
<rect x="333.8" y="144.9" width="0.9" height="0.9" fill="#20a0a0"/>
<rect x="331.8" y="181.1" width="0.9" height="0.9" fill="#2060d0"/>
<rect x="331.5" y="180.7" width="0.9" height="0.9" fill="#2060d0"/>
<rect x="333.4" y="184.0" width="0.9" height="0.9" fill="#40b040"/>
<rect x="333.1" y="185.5" width="0.9" height="0.9" fill="#3050c0"/>
<rect x="333.9" y="149.5" width="0.9" height="0.9" fill="#60d040"/>
<rect x="333.8" y="145.9" width="0.9" height="0.9" fill="#80e060"/>
<rect x="333.2" y="196.9" width="0.9" height="0.9" fill="#40b040"/>
<rect x="330.1" y="164.9" width="0.9" height="0.9" fill="#80e060"/>
<rect x="330.1" y="167.3" width="0.9" height="0.9" fill="#80e060"/>
<rect x="326.8" y="183.1" width="0.9" height="0.9" fill="#3050c0"/>
<rect x="331.8" y="186.3" width="0.9" height="0.9" fill="#1040a0"/>
<rect x="330.1" y="161.0" width="0.9" height="0.9" fill="#60d040"/>
<rect x="330.9" y="141.4" width="0.9" height="0.9" fill="#60d040"/>
<rect x="329.3" y="170.3" width="0.9" height="0.9" fill="#2080c0"/>
<rect x="330.6" y="160.7" width="0.9" height="0.9" fill="#60d040"/>
<rect x="334.2" y="166.7" width="0.9" height="0.9" fill="#40c040"/>
<rect x="334.2" y="160.6" width="0.9" height="0.9" fill="#40c040"/>
<rect x="332.4" y="147.7" width="0.9" height="0.9" fill="#40c040"/>
<rect x="335.5" y="174.1" width="0.9" height="0.9" fill="#2060d0"/>
<rect x="330.4" y="149.8" width="0.9" height="0.9" fill="#60d040"/>
<rect x="330.2" y="180.9" width="0.9" height="0.9" fill="#3050c0"/>
<rect x="327.9" y="175.9" width="0.9" height="0.9" fill="#1040a0"/>
<rect x="331.8" y="189.1" width="0.9" height="0.9" fill="#3050c0"/>
<rect x="328.6" y="174.4" width="0.9" height="0.9" fill="#20a0c0"/>
<rect x="330.2" y="161.7" width="0.9" height="0.9" fill="#60d040"/>
<rect x="337.4" y="195.0" width="0.9" height="0.9" fill="#1040a0"/>
<rect x="334.5" y="158.2" width="0.9" height="0.9" fill="#20a0a0"/>
<rect x="336.5" y="178.6" width="0.9" height="0.9" fill="#20a0c0"/>
<rect x="333.5" y="195.3" width="0.9" height="0.9" fill="#2060d0"/>
<rect x="333.8" y="176.5" width="0.9" height="0.9" fill="#2060d0"/>
<rect x="333.1" y="144.9" width="0.9" height="0.9" fill="#80e060"/>
<rect x="331.8" y="169.5" width="0.9" height="0.9" fill="#60d040"/>
<rect x="333.4" y="150.7" width="0.9" height="0.9" fill="#80e060"/>
<rect x="332.1" y="140.4" width="0.9" height="0.9" fill="#60d040"/>
<rect x="331.2" y="145.1" width="0.9" height="0.9" fill="#80e060"/>
<rect x="333.3" y="146.7" width="0.9" height="0.9" fill="#2080c0"/>
<rect x="324.2" y="197.1" width="0.9" height="0.9" fill="#40b040"/>
<rect x="329.5" y="152.9" width="0.9" height="0.9" fill="#2080c0"/>
<rect x="331.7" y="139.2" width="0.9" height="0.9" fill="#20a0a0"/>
<rect x="333.8" y="193.7" width="0.9" height="0.9" fill="#3050c0"/>
<rect x="333.3" y="143.2" width="0.9" height="0.9" fill="#40c040"/>
<rect x="334.2" y="183.8" width="0.9" height="0.9" fill="#20a0c0"/>
<rect x="326.5" y="201.9" width="0.9" height="0.9" fill="#2060d0"/>
<rect x="330.3" y="193.1" width="0.9" height="0.9" fill="#3050c0"/>
<rect x="328.2" y="169.0" width="0.9" height="0.9" fill="#40c040"/>
<rect x="334.4" y="164.1" width="0.9" height="0.9" fill="#80e060"/>
<rect x="331.5" y="163.1" width="0.9" height="0.9" fill="#40c040"/>
<rect x="330.8" y="172.4" width="0.9" height="0.9" fill="#60d040"/>
<rect x="331.6" y="157.5" width="0.9" height="0.9" fill="#60d040"/>
<rect x="331.3" y="166.1" width="0.9" height="0.9" fill="#40c040"/>
<rect x="329.8" y="184.1" width="0.9" height="0.9" fill="#20a0c0"/>
<rect x="330.5" y="166.7" width="0.9" height="0.9" fill="#60d040"/>
<rect x="329.2" y="152.3" width="0.9" height="0.9" fill="#80e060"/>
<rect x="331.1" y="154.6" width="0.9" height="0.9" fill="#60d040"/>
<rect x="328.3" y="172.2" width="0.9" height="0.9" fill="#40c040"/>
<rect x="331.5" y="148.9" width="0.9" height="0.9" fill="#80e060"/>
<rect x="327.6" y="178.7" width="0.9" height="0.9" fill="#40b040"/>
<rect x="331.9" y="148.8" width="0.9" height="0.9" fill="#40c040"/>
<rect x="329.9" y="191.9" width="0.9" height="0.9" fill="#20a0c0"/>
<rect x="333.3" y="164.1" width="0.9" height="0.9" fill="#40c040"/>
<rect x="329.3" y="153.3" width="0.9" height="0.9" fill="#60d040"/>
<rect x="333.5" y="139.7" width="0.9" height="0.9" fill="#80e060"/>
<rect x="331.3" y="153.5" width="0.9" height="0.9" fill="#80e060"/>
<rect x="332.6" y="148.5" width="0.9" height="0.9" fill="#20a0a0"/>
<rect x="332.5" y="196.4" width="0.9" height="0.9" fill="#20a0c0"/>
<rect x="333.6" y="155.6" width="0.9" height="0.9" fill="#60d040"/>
<rect x="337.1" y="188.5" width="0.9" height="0.9" fill="#1040a0"/>
<rect x="330.5" y="154.0" width="0.9" height="0.9" fill="#20a0a0"/>
<rect x="329.8" y="178.3" width="0.9" height="0.9" fill="#2060d0"/>
<rect x="331.9" y="141.6" width="0.9" height="0.9" fill="#40c040"/>
<rect x="326.4" y="175.9" width="0.9" height="0.9" fill="#2060d0"/>
<rect x="325.9" y="181.6" width="0.9" height="0.9" fill="#40b040"/>
<rect x="330.8" y="140.3" width="0.9" height="0.9" fill="#2080c0"/>
<rect x="326.9" y="195.6" width="0.9" height="0.9" fill="#1040a0"/>
<rect x="331.6" y="159.8" width="0.9" height="0.9" fill="#20a0a0"/>
<rect x="324.3" y="198.2" width="0.9" height="0.9" fill="#20a0c0"/>
<rect x="332.9" y="186.1" width="0.9" height="0.9" fill="#1040a0"/>
<rect x="331.3" y="143.6" width="0.9" height="0.9" fill="#60d040"/>
<rect x="331.6" y="145.3" width="0.9" height="0.9" fill="#20a0a0"/>
<rect x="334.2" y="172.3" width="0.9" height="0.9" fill="#60d040"/>
<rect x="333.1" y="149.2" width="0.9" height="0.9" fill="#60d040"/>
<rect x="331.9" y="191.5" width="0.9" height="0.9" fill="#3050c0"/>
<rect x="331.1" y="161.2" width="0.9" height="0.9" fill="#80e060"/>
<rect x="333.3" y="166.4" width="0.9" height="0.9" fill="#20a0a0"/>
<rect x="329.9" y="155.2" width="0.9" height="0.9" fill="#2080c0"/>
<rect x="333.9" y="196.6" width="0.9" height="0.9" fill="#1040a0"/>
<rect x="331.1" y="140.7" width="0.9" height="0.9" fill="#40c040"/>
<rect x="325.9" y="190.7" width="0.9" height="0.9" fill="#2060d0"/>
<rect x="332.5" y="158.5" width="0.9" height="0.9" fill="#40c040"/>
<rect x="336.3" y="194.2" width="0.9" height="0.9" fill="#1040a0"/>
<rect x="334.8" y="167.9" width="0.9" height="0.9" fill="#20a0a0"/>
<rect x="323.3" y="201.8" width="0.9" height="0.9" fill="#3050c0"/>
<rect x="335.2" y="163.6" width="0.9" height="0.9" fill="#40c040"/>
<rect x="330.5" y="159.7" width="0.9" height="0.9" fill="#60d040"/>
<rect x="332.6" y="143.2" width="0.9" height="0.9" fill="#80e060"/>
<rect x="336.8" y="182.0" width="0.9" height="0.9" fill="#3050c0"/>
<rect x="326.6" y="175.5" width="0.9" height="0.9" fill="#3050c0"/>
<rect x="330.0" y="156.4" width="0.9" height="0.9" fill="#2080c0"/>
<rect x="331.6" y="171.0" width="0.9" height="0.9" fill="#2080c0"/>
<rect x="334.4" y="158.4" width="0.9" height="0.9" fill="#80e060"/>
<rect x="332.7" y="167.9" width="0.9" height="0.9" fill="#40c040"/>
<rect x="326.1" y="190.8" width="0.9" height="0.9" fill="#2060d0"/>
<rect x="325.7" y="193.0" width="0.9" height="0.9" fill="#20a0c0"/>
</svg>
<div class="a" style="left:443px;top:72px;width:57px;height:160px;border:1px solid #e4e4e4;background:#fff"></div>
<div class="t" style="left:459px;top:77px;font-family:'Liberation Serif',serif;font-weight:bold;font-size:8.5px;color:#222">Legend</div>
<div class="a" style="left:298px;top:240px;width:200px;height:21px;border:1px solid #e2e2e2"></div>
<div class="t" style="left:301px;top:236px;font-family:'Liberation Mono',monospace;font-size:7.5px;color:#333;background:#fafafa;padding:0 1px">Option:</div>
<div class="a" style="left:311px;top:246px;width:25px;height:11px;background:#e8eef6;border:1px dotted #9aa"></div>
<div class="t" style="left:316px;top:248px;font-family:'Liberation Mono',monospace;font-size:7.5px;color:#3050a0">Flat</div>
<div class="a" style="left:344px;top:249px;width:9px;height:9px;border:1px solid #444;background:#fff"></div>
<svg class="a" style="left:344px;top:249px" width="9" height="9"><path d="M1.5 4.5l2 2.2l4-5" fill="none" stroke="#333" stroke-width="1"/></svg>
<div class="t" style="left:355px;top:250px;font-family:'Liberation Mono',monospace;font-size:7.5px;color:#333">Legend</div>
<div class="a" style="left:385px;top:249px;width:9px;height:9px;border:1px solid #444;background:#fff"></div>
<svg class="a" style="left:385px;top:249px" width="9" height="9"><path d="M1.5 4.5l2 2.2l4-5" fill="none" stroke="#333" stroke-width="1"/></svg>
<div class="t" style="left:396px;top:250px;font-family:'Liberation Mono',monospace;font-size:7.5px;color:#333">Mesh</div>
<div class="a" style="left:449px;top:95.0px;width:23px;height:10.5px;background:#fde9e5"></div>
<div class="a" style="left:449px;top:105.2px;width:23px;height:10.5px;background:#ffc2ba"></div>
<div class="a" style="left:449px;top:115.4px;width:23px;height:10.5px;background:#ff7d6c"></div>
<div class="a" style="left:449px;top:125.6px;width:23px;height:10.5px;background:#ff2b12"></div>
<div class="a" style="left:449px;top:135.8px;width:23px;height:10.5px;background:#ff4c00"></div>
<div class="a" style="left:449px;top:146.0px;width:23px;height:10.5px;background:#ff7a00"></div>
<div class="a" style="left:449px;top:156.2px;width:23px;height:10.5px;background:#ffb400"></div>
<div class="a" style="left:449px;top:166.4px;width:23px;height:10.5px;background:#f8ee00"></div>
<div class="a" style="left:449px;top:176.6px;width:23px;height:10.5px;background:#c4e600"></div>
<div class="a" style="left:449px;top:186.8px;width:23px;height:10.5px;background:#74de00"></div>
<div class="a" style="left:449px;top:197.0px;width:23px;height:10.5px;background:#00de00"></div>
<div class="a" style="left:449px;top:207.2px;width:23px;height:10.5px;background:#00d83c"></div>
<div class="a" style="left:449px;top:217.4px;width:23px;height:10.5px;background:#12d84c"></div>
<div class="a" style="left:449px;top:228px;width:23px;height:3px;background:#18e0d8"></div>
<div class="t" style="left:474.5px;top:90.8px;font-size:7.5px;color:#333">200</div>
<div class="t" style="left:474.5px;top:101.0px;font-size:7.5px;color:#333">189.</div>
<div class="t" style="left:474.5px;top:111.2px;font-size:7.5px;color:#333">179</div>
<div class="t" style="left:474.5px;top:121.4px;font-size:7.5px;color:#333">168.</div>
<div class="t" style="left:474.5px;top:131.6px;font-size:7.5px;color:#333">158</div>
<div class="t" style="left:474.5px;top:141.8px;font-size:7.5px;color:#333">147.</div>
<div class="t" style="left:474.5px;top:152.0px;font-size:7.5px;color:#333">137</div>
<div class="t" style="left:474.5px;top:162.2px;font-size:7.5px;color:#333">126.</div>
<div class="t" style="left:474.5px;top:172.4px;font-size:7.5px;color:#333">116</div>
<div class="t" style="left:474.5px;top:182.6px;font-size:7.5px;color:#333">105.</div>
<div class="t" style="left:474.5px;top:192.8px;font-size:7.5px;color:#333">95</div>
<div class="t" style="left:474.5px;top:203.0px;font-size:7.5px;color:#333">84.5</div>
<div class="t" style="left:474.5px;top:213.2px;font-size:7.5px;color:#333">74</div>
<div class="t" style="left:474.5px;top:223.4px;font-size:7.5px;color:#333">63.5</div>
<!-- /dialog -->
<!-- banner -->
<div class="a" style="left:481px;top:580px;width:189px;height:39.5px;background:rgba(60,152,56,.87)"></div>
<div class="t sx" style="left:486px;top:582px;font-size:29.5px;color:#1b1b1b;letter-spacing:1px;transform:scaleX(1.125);-webkit-text-stroke:0.7px #4a9c46">3D imaging</div>
</body></html>
